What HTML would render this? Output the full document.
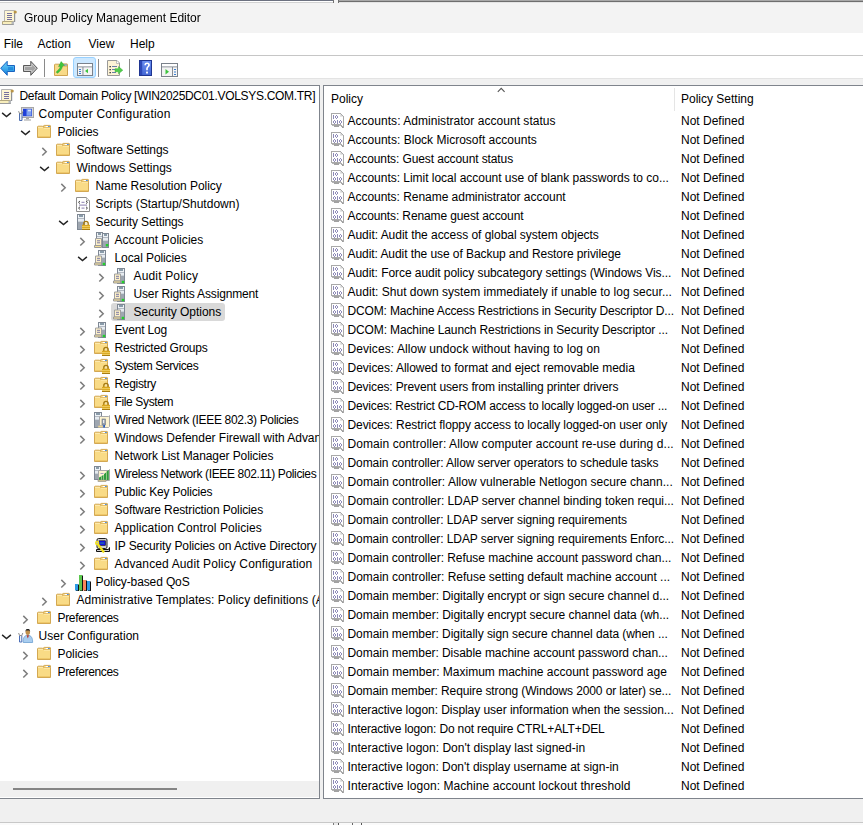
<!DOCTYPE html><html><head><meta charset="utf-8"><style>*{margin:0;padding:0;box-sizing:border-box}
html,body{width:863px;height:825px;overflow:hidden;background:#f0f0f0;font-family:"Liberation Sans",sans-serif;font-size:12px;color:#000}
.abs{position:absolute}
#topstrip{position:absolute;left:0;top:0;width:863px;height:3px}
#title{position:absolute;left:0;top:3px;width:863px;height:30px;background:#f3f3f3}
#menubar{position:absolute;left:0;top:33px;width:863px;height:22px;background:#fff}
#menuline{position:absolute;left:0;top:55px;width:863px;height:1px;background:#c6c6c6}
#toolbar{position:absolute;left:0;top:56px;width:863px;height:22px;background:#fff}
#toolline{position:absolute;left:0;top:78px;width:863px;height:1px;background:#e3e3e3}
.txt{position:absolute;white-space:nowrap;line-height:18px;height:18px}
#tree{position:absolute;left:-1px;top:85px;width:321px;height:714px;border:1px solid #7f848c;background:#fff;overflow:hidden}
#treein{position:absolute;left:0;top:0;width:319px;height:695px;overflow:hidden}
#hscroll{position:absolute;left:0;top:695px;width:319px;height:16px;background:#f0f0f0}
#hthumb{position:absolute;left:13px;top:7px;width:164px;height:2px;background:#858585}
#list{position:absolute;left:323px;top:85px;width:545px;height:714px;border:1px solid #7f848c;background:#fff;overflow:hidden}
.exp,.ico,.tt{position:absolute;height:18px;line-height:18px;white-space:nowrap}
svg{display:block}
.sel{position:absolute;height:18px;background:#d9d9d9;border-radius:3px}
.hdr,.lt,.lv{position:absolute;white-space:nowrap;height:19px;line-height:19px}
.lt{left:23.5px}
.lv{left:357px}
.lico{position:absolute;left:7px}
#coldiv{position:absolute;left:350px;top:2px;width:1px;height:23px;background:#e5e5e5}
#sortarrow{position:absolute;left:173px;top:1px}
#status{position:absolute;left:0;top:799px;width:863px;height:23px;background:#f0f0f0}
#bottomline{position:absolute;left:0;top:822px;width:863px;height:1px;background:#c8c8c8}
#bottomw{position:absolute;left:0;top:823px;width:863px;height:2px;background:#fafafa}
</style></head><body><div id="topstrip">
 <div class="abs" style="left:0;top:0;width:333px;height:1px;background:#6c7180"></div>
 <div class="abs" style="left:0;top:1px;width:333px;height:1px;background:#ffffff"></div>
 <div class="abs" style="left:0;top:2px;width:333px;height:1px;background:#d2d2d2"></div>
 <div class="abs" style="left:333px;top:0;width:1px;height:3px;background:#707070"></div>
 <div class="abs" style="left:334px;top:0;width:4px;height:3px;background:#f4f4f4"></div>
 <div class="abs" style="left:338px;top:0;width:1px;height:3px;background:#707070"></div>
 <div class="abs" style="left:339px;top:0;width:524px;height:1px;background:#a8a8a8"></div>
 <div class="abs" style="left:339px;top:1px;width:524px;height:1px;background:#6e6e6e"></div>
 <div class="abs" style="left:339px;top:2px;width:524px;height:1px;background:#e4e4e4"></div>
</div>
<div id="title"><div class="abs" id="titleicon" style="left:0px;top:7px"><svg width="18" height="16" viewBox="0 0 18 16" ><g transform="translate(2,0) scale(1)"><path d="M2.5 0.5H12.5V11.5H2.5Z" fill="#fdf5d3" stroke="#b4b4b4"/><rect x="12" y="1" width="1.2" height="11" fill="#8f9296"/><circle cx="13.2" cy="2" r="1.6" fill="#b99446"/><rect x="5" y="3" width="5" height="1" fill="#75709f"/><rect x="5" y="5" width="5" height="1" fill="#75709f"/><rect x="5" y="7" width="5" height="1" fill="#75709f"/><rect x="5" y="9" width="5" height="1" fill="#75709f"/><path d="M0.5 11.5H10.5V14.5H0.5Z" fill="#f8eebc" stroke="#b3a77e"/><rect x="9.5" y="12" width="2.5" height="3" fill="#b6b9bd"/><rect x="0.5" y="14" width="11" height="1" fill="#9b9b9b"/></g></svg></div><div class="txt" style="left:23.5px;top:6px;line-height:18px;will-change:transform">Group Policy Management Editor</div></div>
<div id="menubar">
 <div class="txt" style="left:3.7px;top:2px">File</div>
 <div class="txt" style="left:37.5px;top:2px">Action</div>
 <div class="txt" style="left:88.5px;top:2px">View</div>
 <div class="txt" style="left:130px;top:2px">Help</div>
</div>
<div id="menuline"></div>
<div id="toolbar"><div class="abs" style="left:0;top:4px"><svg width="16" height="17"><defs><linearGradient id="gb" x1="0" y1="0" x2="0" y2="1"><stop offset="0" stop-color="#6fd3fb"/><stop offset="1" stop-color="#1383dc"/></linearGradient></defs><path d="M0.7 8.2L7.2 1.3V5.5H14.5V11.5H7.2V15.3Z" fill="url(#gb)" stroke="#1a62c0" stroke-width="1"/><path d="M8 7H13V10H8Z" fill="#0a6fcf" opacity=".5"/></svg></div>
<div class="abs" style="left:22px;top:4px"><svg width="16" height="17"><path d="M15.3 8.2L8.8 1.3V5.5H1.5V11.5H8.8V15.3Z" fill="#a3a3a3" stroke="#5a5a5a" stroke-width="1"/><path d="M9.8 3.7L14 8.2L9.8 12.7V10.5H2.5V6.5H9.8Z" fill="none" stroke="#d8d8d8" stroke-width=".8"/></svg></div>
<div class="abs" style="left:44px;top:3px;width:1px;height:18px;background:#8a8a8a"></div>
<div class="abs" style="left:54px;top:3px"><svg width="16" height="17"><path d="M0.5 16.5V6a.8.8 0 0 1 .8-.8H5.5L6.5 7H13.5V16.5Z" fill="#f8da88" stroke="#cfa451"/><path d="M7 7V5.4a.5.5 0 0 1 .5-.5H13a.5.5 0 0 1 .5.5V7" fill="#f3d27c" stroke="#cfa451"/><rect x="10" y="5.5" width="3" height="1" fill="#4d8fe3"/><path d="M2.2 13.2C3.2 11.5 5.8 10.2 6.6 7.2L4.6 7.6L7.2 2.6L10.4 6.4L8.6 6.8C8 10.5 5.5 12.5 3.6 14.2Z" fill="#3ec73c" stroke="#2aa52a" stroke-width=".5"/></svg></div>
<div class="abs" style="left:73px;top:1px;width:23px;height:21px;background:#cce8ff;border:1px solid #99d1ff;border-radius:3px"></div>
<div class="abs" style="left:77px;top:7px"><svg width="16" height="13"><rect x="0.5" y="0.5" width="15" height="12" fill="#f4f4f4" stroke="#7b828b"/><rect x="1" y="1" width="14" height="2" fill="#ffffff"/><rect x="11" y="1.5" width="1" height="1" fill="#fff"/><rect x="13" y="1.5" width="1" height="1" fill="#fff"/><rect x="1" y="3.5" width="14" height="0.8" fill="#7b828b"/><rect x="5.5" y="4" width="0.9" height="8.5" fill="#7b828b"/><rect x="2" y="6" width="2" height="1" fill="#3a7fd0"/><rect x="2" y="8" width="2" height="1" fill="#3a7fd0"/><rect x="2" y="10" width="2" height="1" fill="#3a7fd0"/><path d="M11 5.8V10.2L8 8Z" fill="#3ec43e"/></svg></div>
<div class="abs" style="left:98px;top:3px;width:1px;height:18px;background:#8a8a8a"></div>
<div class="abs" style="left:107px;top:4px"><svg width="17" height="17"><path d="M0.5 0.5H10L12.5 3V15.5H0.5Z" fill="#fdf3d6" stroke="#9a9a9a"/><path d="M9.5 0.8V3.5H12.2" fill="#fff" stroke="#b0b0b0" stroke-width=".8"/><rect x="2.5" y="6" width="1.3" height="1.3" fill="#222"/><rect x="2.5" y="9" width="1.3" height="1.3" fill="#222"/><rect x="2.5" y="12" width="1.3" height="1.3" fill="#222"/><rect x="5" y="6" width="5" height="1" fill="#6a7fa6"/><rect x="5" y="9" width="5" height="1" fill="#6a7fa6"/><rect x="5" y="12" width="4" height="1" fill="#6a7fa6"/><path d="M8 8.7H11.5V6.6L15.8 10.2L11.5 13.8V11.7H8Z" fill="#52cc4c" stroke="#38b238" stroke-width=".5"/></svg></div>
<div class="abs" style="left:129px;top:3px;width:1px;height:18px;background:#8a8a8a"></div>
<div class="abs" style="left:139px;top:4px"><svg width="14" height="17"><defs><linearGradient id="gh" x1="0" y1="0" x2="0" y2="1"><stop offset="0" stop-color="#6a8ff0"/><stop offset="1" stop-color="#4467d4"/></linearGradient></defs><rect x="0" y="0" width="13" height="16" fill="#1f3591"/><rect x="1" y="1" width="11" height="14" fill="url(#gh)"/><rect x="1" y="1" width="2.2" height="14" fill="#2c48b8"/><path d="M5.4 5.2C5.4 3.3 6.7 2.6 8.2 2.6C9.9 2.6 10.9 3.6 10.9 5C10.9 6.6 9.2 7.1 8.8 8.5V10.2H7.2V8.3C7.5 6.6 9.2 6.2 9.2 5C9.2 4.3 8.8 3.9 8.1 3.9C7.4 3.9 7 4.4 7 5.2Z" fill="#fff"/><rect x="7.1" y="11.6" width="1.8" height="1.9" fill="#fff"/></svg></div>
<div class="abs" style="left:161px;top:7px"><svg width="17" height="14"><rect x="0.5" y="0.5" width="16" height="13" fill="#f4f4f4" stroke="#7b828b"/><rect x="1" y="1" width="15" height="2" fill="#ffffff"/><rect x="12" y="1.5" width="1" height="1" fill="#fff"/><rect x="14" y="1.5" width="1" height="1" fill="#fff"/><rect x="1" y="3.5" width="15" height="0.8" fill="#7b828b"/><rect x="11" y="4" width="0.9" height="9.5" fill="#7b828b"/><rect x="13" y="6" width="2" height="1" fill="#3a7fd0"/><rect x="13" y="8.5" width="2" height="1" fill="#3a7fd0"/><rect x="13" y="11" width="2" height="1" fill="#3a7fd0"/><path d="M4.5 6V11.5L8 8.7Z" fill="#3ec43e"/></svg></div>
</div>
<div id="toolline"></div>
<div id="status"></div>
<div id="bottomline"></div>
<div id="bottomw"></div>
<div class="abs" style="left:333px;top:823px;width:1px;height:2px;background:#7a7a7a"></div>
<div class="abs" style="left:334px;top:823px;width:4px;height:2px;background:#ececec"></div>
<div class="abs" style="left:338px;top:823px;width:1px;height:2px;background:#555"></div>
<div class="abs" style="left:352px;top:823px;width:1px;height:2px;background:#666"></div>
<div class="abs" style="left:361px;top:823px;width:1px;height:2px;background:#555"></div>
<div id="tree"><div id="treein"><div class="ico" style="top:0px;left:-1px"><svg width="20" height="18" viewBox="0 0 20 18" ><g transform="translate(0,3) scale(1)"><path d="M2.5 0.5H12.5V11.5H2.5Z" fill="#fdf5d3" stroke="#b4b4b4"/><rect x="12" y="1" width="1.2" height="11" fill="#8f9296"/><circle cx="13.2" cy="2" r="1.6" fill="#b99446"/><rect x="5" y="3" width="5" height="1" fill="#75709f"/><rect x="5" y="5" width="5" height="1" fill="#75709f"/><rect x="5" y="7" width="5" height="1" fill="#75709f"/><rect x="5" y="9" width="5" height="1" fill="#75709f"/><path d="M0.5 11.5H10.5V14.5H0.5Z" fill="#f8eebc" stroke="#b3a77e"/><rect x="9.5" y="12" width="2.5" height="3" fill="#b6b9bd"/><rect x="0.5" y="14" width="11" height="1" fill="#9b9b9b"/></g></svg></div><div class="tt" style="top:1px;left:19.5px;letter-spacing:-0.308px">Default Domain Policy [WIN2025DC01.VOLSYS.COM.TR]</div><div class="exp" style="top:25.5px;left:1px"><svg width="11" height="6" viewBox="0 0 11 6" ><path d="M1.1 0.9L5.5 4.6L9.9 0.9" fill="none" stroke="#262626" stroke-width="1.45"/></svg></div><div class="ico" style="top:18px;left:18px"><svg width="20" height="18" viewBox="0 0 20 18" ><rect x="3.5" y="3.5" width="12" height="10" fill="#d9d9d9" stroke="#a7a7a7"/><rect x="5" y="4.8" width="9" height="7.4" fill="#1f3fd8"/><rect x="8.5" y="5.2" width="5" height="6.5" fill="#7ea0ef"/><rect x="10" y="5.8" width="3" height="1.5" fill="#d5e1fb"/><rect x="8" y="14" width="3" height="1.3" fill="#a5a5a5"/><rect x="6" y="15.3" width="7" height="1.4" fill="#b9b9b9"/><path d="M1.5 9V16.5H4V9" fill="#e9eef5" stroke="#4f6fb0" stroke-width="1"/><path d="M0.6 7.2L1.6 9.6H4L5 7.2" fill="none" stroke="#8a8a8a" stroke-width="1"/></svg></div><div class="tt" style="top:19px;left:38.5px;letter-spacing:0.214px">Computer Configuration</div><div class="exp" style="top:43.5px;left:20px"><svg width="11" height="6" viewBox="0 0 11 6" ><path d="M1.1 0.9L5.5 4.6L9.9 0.9" fill="none" stroke="#262626" stroke-width="1.45"/></svg></div><div class="ico" style="top:36px;left:37px"><svg width="20" height="18" viewBox="0 0 20 18" ><path d="M0.5 15.5V4.9a.7.7 0 0 1 .7-.7H5.6L6.8 5.5H13.5V15.5Z" fill="#f9db86" stroke="#d3a853"/><path d="M6.6 5.4V3.9a.6.6 0 0 1 .6-.5H12.9a.6.6 0 0 1 .6.5V5.6" fill="#f5d57f" stroke="#d3a853"/><rect x="1" y="5" width="5" height="1" fill="#fde9ad"/><rect x="7" y="6" width="6" height="1" fill="#fde6a2"/><rect x="8.6" y="4" width="2.4" height="1" fill="#fff"/><rect x="11" y="4" width="1.8" height="1" fill="#4d8fe3"/><rect x="1" y="14" width="12" height="1" fill="#efc86a"/></svg></div><div class="tt" style="top:37px;left:57.5px;letter-spacing:-0.043px">Policies</div><div class="exp" style="top:60.5px;left:41.2px"><svg width="7" height="10" viewBox="0 0 7 10" ><path d="M1.3 0.9L5.2 4.7L1.3 8.5" fill="none" stroke="#7d7d7d" stroke-width="1.5"/></svg></div><div class="ico" style="top:54px;left:56px"><svg width="20" height="18" viewBox="0 0 20 18" ><path d="M0.5 15.5V4.9a.7.7 0 0 1 .7-.7H5.6L6.8 5.5H13.5V15.5Z" fill="#f9db86" stroke="#d3a853"/><path d="M6.6 5.4V3.9a.6.6 0 0 1 .6-.5H12.9a.6.6 0 0 1 .6.5V5.6" fill="#f5d57f" stroke="#d3a853"/><rect x="1" y="5" width="5" height="1" fill="#fde9ad"/><rect x="7" y="6" width="6" height="1" fill="#fde6a2"/><rect x="8.6" y="4" width="2.4" height="1" fill="#fff"/><rect x="11" y="4" width="1.8" height="1" fill="#4d8fe3"/><rect x="1" y="14" width="12" height="1" fill="#efc86a"/></svg></div><div class="tt" style="top:55px;left:76.5px;letter-spacing:-0.131px">Software Settings</div><div class="exp" style="top:79.5px;left:39px"><svg width="11" height="6" viewBox="0 0 11 6" ><path d="M1.1 0.9L5.5 4.6L9.9 0.9" fill="none" stroke="#262626" stroke-width="1.45"/></svg></div><div class="ico" style="top:72px;left:56px"><svg width="20" height="18" viewBox="0 0 20 18" ><path d="M0.5 15.5V4.9a.7.7 0 0 1 .7-.7H5.6L6.8 5.5H13.5V15.5Z" fill="#f9db86" stroke="#d3a853"/><path d="M6.6 5.4V3.9a.6.6 0 0 1 .6-.5H12.9a.6.6 0 0 1 .6.5V5.6" fill="#f5d57f" stroke="#d3a853"/><rect x="1" y="5" width="5" height="1" fill="#fde9ad"/><rect x="7" y="6" width="6" height="1" fill="#fde6a2"/><rect x="8.6" y="4" width="2.4" height="1" fill="#fff"/><rect x="11" y="4" width="1.8" height="1" fill="#4d8fe3"/><rect x="1" y="14" width="12" height="1" fill="#efc86a"/></svg></div><div class="tt" style="top:73px;left:76.5px;letter-spacing:0.0px">Windows Settings</div><div class="exp" style="top:96.5px;left:60.2px"><svg width="7" height="10" viewBox="0 0 7 10" ><path d="M1.3 0.9L5.2 4.7L1.3 8.5" fill="none" stroke="#7d7d7d" stroke-width="1.5"/></svg></div><div class="ico" style="top:90px;left:75px"><svg width="20" height="18" viewBox="0 0 20 18" ><path d="M0.5 15.5V4.9a.7.7 0 0 1 .7-.7H5.6L6.8 5.5H13.5V15.5Z" fill="#f9db86" stroke="#d3a853"/><path d="M6.6 5.4V3.9a.6.6 0 0 1 .6-.5H12.9a.6.6 0 0 1 .6.5V5.6" fill="#f5d57f" stroke="#d3a853"/><rect x="1" y="5" width="5" height="1" fill="#fde9ad"/><rect x="7" y="6" width="6" height="1" fill="#fde6a2"/><rect x="8.6" y="4" width="2.4" height="1" fill="#fff"/><rect x="11" y="4" width="1.8" height="1" fill="#4d8fe3"/><rect x="1" y="14" width="12" height="1" fill="#efc86a"/></svg></div><div class="tt" style="top:91px;left:95.5px;letter-spacing:-0.057px">Name Resolution Policy</div><div class="ico" style="top:108px;left:75px"><svg width="20" height="19" viewBox="0 0 20 19" ><path d="M1.5 3.5H11.5L14.5 6.5V17.5H1.5Z" fill="#fff" stroke="#8e8e8e"/><path d="M11.5 3.5V6.5H14.5" fill="#f0f0f0" stroke="#b5b5b5"/><path d="M5 7L3.5 8.3L5 9.6M11 7L12.5 8.3L11 9.6" fill="none" stroke="#4a4a4a" stroke-width="1"/><rect x="6.5" y="7.8" width="3" height="1" fill="#8b7fb0"/><rect x="4" y="10.6" width="8" height="1" fill="#8b7fb0"/><path d="M5 12.8L3.5 14.1L5 15.4M11 12.8L12.5 14.1L11 15.4" fill="none" stroke="#4a4a4a" stroke-width="1"/><rect x="6.5" y="13.6" width="3" height="1" fill="#8b7fb0"/></svg></div><div class="tt" style="top:109px;left:95.5px;letter-spacing:0.024px">Scripts (Startup/Shutdown)</div><div class="exp" style="top:133.5px;left:58px"><svg width="11" height="6" viewBox="0 0 11 6" ><path d="M1.1 0.9L5.5 4.6L9.9 0.9" fill="none" stroke="#262626" stroke-width="1.45"/></svg></div><div class="ico" style="top:126px;left:75px"><svg width="20" height="19" viewBox="0 0 20 19" ><g transform="translate(2,2)"><rect x="0.5" y="0.5" width="7" height="15" fill="#b3bac3" stroke="#7f8894"/><rect x="1" y="1" width="6" height="3" fill="#eef2f6"/><rect x="2" y="1.5" width="4" height="1" fill="#27475e"/><rect x="1" y="5" width="6" height="2.5" fill="#e6ebf0"/><rect x="1" y="8" width="6" height="7" fill="#9ea6b0"/></g><g transform="translate(7,9)"><path d="M1.8 4V2.6a2.2 2.2 0 0 1 4.4 0V4" fill="none" stroke="#a57a12" stroke-width="1.3"/><rect x="3.2" y="1.6" width="1.6" height="1.6" fill="#f4e7b0"/><rect x="0" y="3.8" width="8" height="5.2" fill="#d9a61c"/><rect x="0" y="5.2" width="8" height="0.9" fill="#f2d16a"/><rect x="0" y="7" width="8" height="0.9" fill="#f2d16a"/><rect x="0" y="8.2" width="8" height="0.8" fill="#9c740f"/></g></svg></div><div class="tt" style="top:127px;left:95.5px;letter-spacing:-0.125px">Security Settings</div><div class="exp" style="top:150.5px;left:79.2px"><svg width="7" height="10" viewBox="0 0 7 10" ><path d="M1.3 0.9L5.2 4.7L1.3 8.5" fill="none" stroke="#7d7d7d" stroke-width="1.5"/></svg></div><div class="ico" style="top:144px;left:94px"><svg width="20" height="19" viewBox="0 0 20 19" ><g transform="translate(2,2)"><rect x="0.5" y="0.5" width="6" height="11" fill="#b3bac3" stroke="#7f8894"/><rect x="1" y="1" width="5" height="3" fill="#eef2f6"/><rect x="2" y="1.5" width="3" height="1" fill="#27475e"/><rect x="1" y="5" width="5" height="2.5" fill="#e6ebf0"/><rect x="1" y="8" width="5" height="3" fill="#9ea6b0"/></g><g transform="translate(8,3)"><rect x="0.5" y="0.5" width="6" height="14" fill="#b3bac3" stroke="#7f8894"/><rect x="1" y="1" width="5" height="3" fill="#eef2f6"/><rect x="2" y="1.5" width="3" height="1" fill="#27475e"/><rect x="1" y="5" width="5" height="2.5" fill="#e6ebf0"/><rect x="1" y="8" width="5" height="6" fill="#9ea6b0"/></g><g transform="translate(0,8)"><path d="M1.5 0.5H7.5V7.5H1.5Z" fill="#fdf0c8" stroke="#a0a0a0"/><rect x="3" y="2.3" width="3" height="1" fill="#7c7ba6"/><rect x="3" y="4.3" width="3" height="1" fill="#7c7ba6"/><path d="M0.5 7.5H7.5V9.5H0.5Z" fill="#f3dd95" stroke="#9b9b9b"/></g><rect x="11.8" y="14" width="2.5" height="2.4" fill="#22d12a"/></svg></div><div class="tt" style="top:145px;left:114.5px;letter-spacing:0.053px">Account Policies</div><div class="exp" style="top:169.5px;left:77px"><svg width="11" height="6" viewBox="0 0 11 6" ><path d="M1.1 0.9L5.5 4.6L9.9 0.9" fill="none" stroke="#262626" stroke-width="1.45"/></svg></div><div class="ico" style="top:162px;left:94px"><svg width="20" height="19" viewBox="0 0 20 19" ><g transform="translate(4,2)"><rect x="0.5" y="0.5" width="7" height="15" fill="#b3bac3" stroke="#7f8894"/><rect x="1" y="1" width="6" height="3" fill="#eef2f6"/><rect x="2" y="1.5" width="4" height="1" fill="#27475e"/><rect x="1" y="5" width="6" height="2.5" fill="#e6ebf0"/><rect x="1" y="8" width="6" height="7" fill="#9ea6b0"/></g><g transform="translate(0,7.5)"><path d="M1.5 0.5H7.5V7.5H1.5Z" fill="#fdf0c8" stroke="#a0a0a0"/><rect x="3" y="2.3" width="3" height="1" fill="#7c7ba6"/><rect x="3" y="4.3" width="3" height="1" fill="#7c7ba6"/><path d="M0.5 7.5H7.5V9.5H0.5Z" fill="#f3dd95" stroke="#9b9b9b"/></g><rect x="8.7" y="14.8" width="2.5" height="2.4" fill="#22d12a"/></svg></div><div class="tt" style="top:163px;left:114.5px;letter-spacing:-0.092px">Local Policies</div><div class="exp" style="top:186.5px;left:98.2px"><svg width="7" height="10" viewBox="0 0 7 10" ><path d="M1.3 0.9L5.2 4.7L1.3 8.5" fill="none" stroke="#7d7d7d" stroke-width="1.5"/></svg></div><div class="ico" style="top:180px;left:113px"><svg width="20" height="19" viewBox="0 0 20 19" ><g transform="translate(4,2)"><rect x="0.5" y="0.5" width="7" height="15" fill="#b3bac3" stroke="#7f8894"/><rect x="1" y="1" width="6" height="3" fill="#eef2f6"/><rect x="2" y="1.5" width="4" height="1" fill="#27475e"/><rect x="1" y="5" width="6" height="2.5" fill="#e6ebf0"/><rect x="1" y="8" width="6" height="7" fill="#9ea6b0"/></g><g transform="translate(0,7.5)"><path d="M1.5 0.5H7.5V7.5H1.5Z" fill="#fdf0c8" stroke="#a0a0a0"/><rect x="3" y="2.3" width="3" height="1" fill="#7c7ba6"/><rect x="3" y="4.3" width="3" height="1" fill="#7c7ba6"/><path d="M0.5 7.5H7.5V9.5H0.5Z" fill="#f3dd95" stroke="#9b9b9b"/></g><rect x="8.7" y="14.8" width="2.5" height="2.4" fill="#22d12a"/></svg></div><div class="tt" style="top:181px;left:133.5px;letter-spacing:0.164px">Audit Policy</div><div class="exp" style="top:204.5px;left:98.2px"><svg width="7" height="10" viewBox="0 0 7 10" ><path d="M1.3 0.9L5.2 4.7L1.3 8.5" fill="none" stroke="#7d7d7d" stroke-width="1.5"/></svg></div><div class="ico" style="top:198px;left:113px"><svg width="20" height="19" viewBox="0 0 20 19" ><g transform="translate(4,2)"><rect x="0.5" y="0.5" width="7" height="15" fill="#b3bac3" stroke="#7f8894"/><rect x="1" y="1" width="6" height="3" fill="#eef2f6"/><rect x="2" y="1.5" width="4" height="1" fill="#27475e"/><rect x="1" y="5" width="6" height="2.5" fill="#e6ebf0"/><rect x="1" y="8" width="6" height="7" fill="#9ea6b0"/></g><g transform="translate(0,7.5)"><path d="M1.5 0.5H7.5V7.5H1.5Z" fill="#fdf0c8" stroke="#a0a0a0"/><rect x="3" y="2.3" width="3" height="1" fill="#7c7ba6"/><rect x="3" y="4.3" width="3" height="1" fill="#7c7ba6"/><path d="M0.5 7.5H7.5V9.5H0.5Z" fill="#f3dd95" stroke="#9b9b9b"/></g><rect x="8.7" y="14.8" width="2.5" height="2.4" fill="#22d12a"/></svg></div><div class="tt" style="top:199px;left:133.5px;letter-spacing:-0.148px">User Rights Assignment</div><div class="sel" style="top:217px;left:111px;width:114px"></div><div class="exp" style="top:222.5px;left:98.2px"><svg width="7" height="10" viewBox="0 0 7 10" ><path d="M1.3 0.9L5.2 4.7L1.3 8.5" fill="none" stroke="#7d7d7d" stroke-width="1.5"/></svg></div><div class="ico" style="top:216px;left:113px"><svg width="20" height="19" viewBox="0 0 20 19" ><g transform="translate(4,2)"><rect x="0.5" y="0.5" width="7" height="15" fill="#b3bac3" stroke="#7f8894"/><rect x="1" y="1" width="6" height="3" fill="#eef2f6"/><rect x="2" y="1.5" width="4" height="1" fill="#27475e"/><rect x="1" y="5" width="6" height="2.5" fill="#e6ebf0"/><rect x="1" y="8" width="6" height="7" fill="#9ea6b0"/></g><g transform="translate(0,7.5)"><path d="M1.5 0.5H7.5V7.5H1.5Z" fill="#fdf0c8" stroke="#a0a0a0"/><rect x="3" y="2.3" width="3" height="1" fill="#7c7ba6"/><rect x="3" y="4.3" width="3" height="1" fill="#7c7ba6"/><path d="M0.5 7.5H7.5V9.5H0.5Z" fill="#f3dd95" stroke="#9b9b9b"/></g><rect x="8.7" y="14.8" width="2.5" height="2.4" fill="#22d12a"/></svg></div><div class="tt" style="top:217px;left:133.5px;letter-spacing:-0.02px">Security Options</div><div class="exp" style="top:240.5px;left:79.2px"><svg width="7" height="10" viewBox="0 0 7 10" ><path d="M1.3 0.9L5.2 4.7L1.3 8.5" fill="none" stroke="#7d7d7d" stroke-width="1.5"/></svg></div><div class="ico" style="top:234px;left:94px"><svg width="20" height="19" viewBox="0 0 20 19" ><g transform="translate(4,2)"><rect x="0.5" y="0.5" width="7" height="15" fill="#b3bac3" stroke="#7f8894"/><rect x="1" y="1" width="6" height="3" fill="#eef2f6"/><rect x="2" y="1.5" width="4" height="1" fill="#27475e"/><rect x="1" y="5" width="6" height="2.5" fill="#e6ebf0"/><rect x="1" y="8" width="6" height="7" fill="#9ea6b0"/></g><g transform="translate(0,7.5)"><path d="M1.5 0.5H7.5V7.5H1.5Z" fill="#fdf0c8" stroke="#a0a0a0"/><rect x="3" y="2.3" width="3" height="1" fill="#7c7ba6"/><rect x="3" y="4.3" width="3" height="1" fill="#7c7ba6"/><path d="M0.5 7.5H7.5V9.5H0.5Z" fill="#f3dd95" stroke="#9b9b9b"/></g><rect x="8.7" y="14.8" width="2.5" height="2.4" fill="#22d12a"/></svg></div><div class="tt" style="top:235px;left:114.5px;letter-spacing:-0.175px">Event Log</div><div class="exp" style="top:258.5px;left:79.2px"><svg width="7" height="10" viewBox="0 0 7 10" ><path d="M1.3 0.9L5.2 4.7L1.3 8.5" fill="none" stroke="#7d7d7d" stroke-width="1.5"/></svg></div><div class="ico" style="top:252px;left:94px"><svg width="20" height="19" viewBox="0 0 20 19" ><path d="M0.5 15.5V4.9a.7.7 0 0 1 .7-.7H5.6L6.8 5.5H13.5V15.5Z" fill="#f9db86" stroke="#d3a853"/><path d="M6.6 5.4V3.9a.6.6 0 0 1 .6-.5H12.9a.6.6 0 0 1 .6.5V5.6" fill="#f5d57f" stroke="#d3a853"/><rect x="1" y="5" width="5" height="1" fill="#fde9ad"/><rect x="7" y="6" width="6" height="1" fill="#fde6a2"/><rect x="8.6" y="4" width="2.4" height="1" fill="#fff"/><rect x="11" y="4" width="1.8" height="1" fill="#4d8fe3"/><rect x="1" y="14" width="12" height="1" fill="#efc86a"/><g transform="translate(8,9)"><path d="M1.8 4V2.6a2.2 2.2 0 0 1 4.4 0V4" fill="none" stroke="#a57a12" stroke-width="1.3"/><rect x="3.2" y="1.6" width="1.6" height="1.6" fill="#f4e7b0"/><rect x="0" y="3.8" width="8" height="5.2" fill="#d9a61c"/><rect x="0" y="5.2" width="8" height="0.9" fill="#f2d16a"/><rect x="0" y="7" width="8" height="0.9" fill="#f2d16a"/><rect x="0" y="8.2" width="8" height="0.8" fill="#9c740f"/></g></svg></div><div class="tt" style="top:253px;left:114.5px;letter-spacing:-0.213px">Restricted Groups</div><div class="exp" style="top:276.5px;left:79.2px"><svg width="7" height="10" viewBox="0 0 7 10" ><path d="M1.3 0.9L5.2 4.7L1.3 8.5" fill="none" stroke="#7d7d7d" stroke-width="1.5"/></svg></div><div class="ico" style="top:270px;left:94px"><svg width="20" height="19" viewBox="0 0 20 19" ><path d="M0.5 15.5V4.9a.7.7 0 0 1 .7-.7H5.6L6.8 5.5H13.5V15.5Z" fill="#f9db86" stroke="#d3a853"/><path d="M6.6 5.4V3.9a.6.6 0 0 1 .6-.5H12.9a.6.6 0 0 1 .6.5V5.6" fill="#f5d57f" stroke="#d3a853"/><rect x="1" y="5" width="5" height="1" fill="#fde9ad"/><rect x="7" y="6" width="6" height="1" fill="#fde6a2"/><rect x="8.6" y="4" width="2.4" height="1" fill="#fff"/><rect x="11" y="4" width="1.8" height="1" fill="#4d8fe3"/><rect x="1" y="14" width="12" height="1" fill="#efc86a"/><g transform="translate(8,9)"><path d="M1.8 4V2.6a2.2 2.2 0 0 1 4.4 0V4" fill="none" stroke="#a57a12" stroke-width="1.3"/><rect x="3.2" y="1.6" width="1.6" height="1.6" fill="#f4e7b0"/><rect x="0" y="3.8" width="8" height="5.2" fill="#d9a61c"/><rect x="0" y="5.2" width="8" height="0.9" fill="#f2d16a"/><rect x="0" y="7" width="8" height="0.9" fill="#f2d16a"/><rect x="0" y="8.2" width="8" height="0.8" fill="#9c740f"/></g></svg></div><div class="tt" style="top:271px;left:114.5px;letter-spacing:-0.371px">System Services</div><div class="exp" style="top:294.5px;left:79.2px"><svg width="7" height="10" viewBox="0 0 7 10" ><path d="M1.3 0.9L5.2 4.7L1.3 8.5" fill="none" stroke="#7d7d7d" stroke-width="1.5"/></svg></div><div class="ico" style="top:288px;left:94px"><svg width="20" height="19" viewBox="0 0 20 19" ><path d="M0.5 15.5V4.9a.7.7 0 0 1 .7-.7H5.6L6.8 5.5H13.5V15.5Z" fill="#f9db86" stroke="#d3a853"/><path d="M6.6 5.4V3.9a.6.6 0 0 1 .6-.5H12.9a.6.6 0 0 1 .6.5V5.6" fill="#f5d57f" stroke="#d3a853"/><rect x="1" y="5" width="5" height="1" fill="#fde9ad"/><rect x="7" y="6" width="6" height="1" fill="#fde6a2"/><rect x="8.6" y="4" width="2.4" height="1" fill="#fff"/><rect x="11" y="4" width="1.8" height="1" fill="#4d8fe3"/><rect x="1" y="14" width="12" height="1" fill="#efc86a"/><g transform="translate(8,9)"><path d="M1.8 4V2.6a2.2 2.2 0 0 1 4.4 0V4" fill="none" stroke="#a57a12" stroke-width="1.3"/><rect x="3.2" y="1.6" width="1.6" height="1.6" fill="#f4e7b0"/><rect x="0" y="3.8" width="8" height="5.2" fill="#d9a61c"/><rect x="0" y="5.2" width="8" height="0.9" fill="#f2d16a"/><rect x="0" y="7" width="8" height="0.9" fill="#f2d16a"/><rect x="0" y="8.2" width="8" height="0.8" fill="#9c740f"/></g></svg></div><div class="tt" style="top:289px;left:114.5px;letter-spacing:-0.314px">Registry</div><div class="exp" style="top:312.5px;left:79.2px"><svg width="7" height="10" viewBox="0 0 7 10" ><path d="M1.3 0.9L5.2 4.7L1.3 8.5" fill="none" stroke="#7d7d7d" stroke-width="1.5"/></svg></div><div class="ico" style="top:306px;left:94px"><svg width="20" height="19" viewBox="0 0 20 19" ><path d="M0.5 15.5V4.9a.7.7 0 0 1 .7-.7H5.6L6.8 5.5H13.5V15.5Z" fill="#f9db86" stroke="#d3a853"/><path d="M6.6 5.4V3.9a.6.6 0 0 1 .6-.5H12.9a.6.6 0 0 1 .6.5V5.6" fill="#f5d57f" stroke="#d3a853"/><rect x="1" y="5" width="5" height="1" fill="#fde9ad"/><rect x="7" y="6" width="6" height="1" fill="#fde6a2"/><rect x="8.6" y="4" width="2.4" height="1" fill="#fff"/><rect x="11" y="4" width="1.8" height="1" fill="#4d8fe3"/><rect x="1" y="14" width="12" height="1" fill="#efc86a"/><g transform="translate(8,9)"><path d="M1.8 4V2.6a2.2 2.2 0 0 1 4.4 0V4" fill="none" stroke="#a57a12" stroke-width="1.3"/><rect x="3.2" y="1.6" width="1.6" height="1.6" fill="#f4e7b0"/><rect x="0" y="3.8" width="8" height="5.2" fill="#d9a61c"/><rect x="0" y="5.2" width="8" height="0.9" fill="#f2d16a"/><rect x="0" y="7" width="8" height="0.9" fill="#f2d16a"/><rect x="0" y="8.2" width="8" height="0.8" fill="#9c740f"/></g></svg></div><div class="tt" style="top:307px;left:114.5px;letter-spacing:-0.36px">File System</div><div class="exp" style="top:330.5px;left:79.2px"><svg width="7" height="10" viewBox="0 0 7 10" ><path d="M1.3 0.9L5.2 4.7L1.3 8.5" fill="none" stroke="#7d7d7d" stroke-width="1.5"/></svg></div><div class="ico" style="top:324px;left:94px"><svg width="20" height="19" viewBox="0 0 20 19" ><g transform="translate(0,2)"><rect x="0.5" y="0.5" width="7" height="15" fill="#b3bac3" stroke="#7f8894"/><rect x="1" y="1" width="6" height="3" fill="#eef2f6"/><rect x="2" y="1.5" width="4" height="1" fill="#27475e"/><rect x="1" y="5" width="6" height="2.5" fill="#e6ebf0"/><rect x="1" y="8" width="6" height="7" fill="#9ea6b0"/></g><path d="M5.5 6.5H14.5L15.5 5.5V16.5L14.5 17.5H5.5Z" fill="#fdf3cf" stroke="#a8a8a8"/><rect x="8" y="9" width="3.5" height="6" fill="#9aa3ad" stroke="#6d7682" stroke-width=".6"/><rect x="9.2" y="10" width="1" height="3" fill="#fff"/><rect x="8.5" y="15" width="2.5" height="2.5" fill="#2a60c0"/><rect x="4" y="15.5" width="5" height="2" fill="#f1d98f" stroke="#a8a8a8" stroke-width=".6"/></svg></div><div class="tt" style="top:325px;left:114.5px;letter-spacing:-0.329px">Wired Network (IEEE 802.3) Policies</div><div class="exp" style="top:348.5px;left:79.2px"><svg width="7" height="10" viewBox="0 0 7 10" ><path d="M1.3 0.9L5.2 4.7L1.3 8.5" fill="none" stroke="#7d7d7d" stroke-width="1.5"/></svg></div><div class="ico" style="top:342px;left:94px"><svg width="20" height="18" viewBox="0 0 20 18" ><path d="M0.5 15.5V4.9a.7.7 0 0 1 .7-.7H5.6L6.8 5.5H13.5V15.5Z" fill="#f9db86" stroke="#d3a853"/><path d="M6.6 5.4V3.9a.6.6 0 0 1 .6-.5H12.9a.6.6 0 0 1 .6.5V5.6" fill="#f5d57f" stroke="#d3a853"/><rect x="1" y="5" width="5" height="1" fill="#fde9ad"/><rect x="7" y="6" width="6" height="1" fill="#fde6a2"/><rect x="8.6" y="4" width="2.4" height="1" fill="#fff"/><rect x="11" y="4" width="1.8" height="1" fill="#4d8fe3"/><rect x="1" y="14" width="12" height="1" fill="#efc86a"/></svg></div><div class="tt" style="top:343px;left:114.5px;letter-spacing:-0.021px">Windows Defender Firewall with Advanced Security</div><div class="ico" style="top:360px;left:94px"><svg width="20" height="18" viewBox="0 0 20 18" ><path d="M0.5 15.5V4.9a.7.7 0 0 1 .7-.7H5.6L6.8 5.5H13.5V15.5Z" fill="#f9db86" stroke="#d3a853"/><path d="M6.6 5.4V3.9a.6.6 0 0 1 .6-.5H12.9a.6.6 0 0 1 .6.5V5.6" fill="#f5d57f" stroke="#d3a853"/><rect x="1" y="5" width="5" height="1" fill="#fde9ad"/><rect x="7" y="6" width="6" height="1" fill="#fde6a2"/><rect x="8.6" y="4" width="2.4" height="1" fill="#fff"/><rect x="11" y="4" width="1.8" height="1" fill="#4d8fe3"/><rect x="1" y="14" width="12" height="1" fill="#efc86a"/></svg></div><div class="tt" style="top:361px;left:114.5px;letter-spacing:-0.089px">Network List Manager Policies</div><div class="exp" style="top:384.5px;left:79.2px"><svg width="7" height="10" viewBox="0 0 7 10" ><path d="M1.3 0.9L5.2 4.7L1.3 8.5" fill="none" stroke="#7d7d7d" stroke-width="1.5"/></svg></div><div class="ico" style="top:378px;left:94px"><svg width="20" height="19" viewBox="0 0 20 19" ><g transform="translate(0,2)"><rect x="0.5" y="0.5" width="6" height="13" fill="#b3bac3" stroke="#7f8894"/><rect x="1" y="1" width="5" height="3" fill="#eef2f6"/><rect x="2" y="1.5" width="3" height="1" fill="#27475e"/><rect x="1" y="5" width="5" height="2.5" fill="#e6ebf0"/><rect x="1" y="8" width="5" height="5" fill="#9ea6b0"/></g><path d="M4.5 6.5H14.5L15.5 5.5V16.5H4.5Z" fill="#fdf3cf" stroke="#a8a8a8"/><path d="M5 16V13.5L7 12.5V16ZM7.5 16V12L9.5 11V16ZM10 16V10L12 8.5V16ZM12.5 16V7.5L14.8 6V16Z" fill="#2f9a3c"/><rect x="6.5" y="9" width="3" height="0.8" fill="#8f85b9"/><rect x="4" y="16" width="8" height="1.6" fill="#f1d98f" stroke="#888" stroke-width=".6"/></svg></div><div class="tt" style="top:379px;left:114.5px;letter-spacing:-0.36px">Wireless Network (IEEE 802.11) Policies</div><div class="exp" style="top:402.5px;left:79.2px"><svg width="7" height="10" viewBox="0 0 7 10" ><path d="M1.3 0.9L5.2 4.7L1.3 8.5" fill="none" stroke="#7d7d7d" stroke-width="1.5"/></svg></div><div class="ico" style="top:396px;left:94px"><svg width="20" height="18" viewBox="0 0 20 18" ><path d="M0.5 15.5V4.9a.7.7 0 0 1 .7-.7H5.6L6.8 5.5H13.5V15.5Z" fill="#f9db86" stroke="#d3a853"/><path d="M6.6 5.4V3.9a.6.6 0 0 1 .6-.5H12.9a.6.6 0 0 1 .6.5V5.6" fill="#f5d57f" stroke="#d3a853"/><rect x="1" y="5" width="5" height="1" fill="#fde9ad"/><rect x="7" y="6" width="6" height="1" fill="#fde6a2"/><rect x="8.6" y="4" width="2.4" height="1" fill="#fff"/><rect x="11" y="4" width="1.8" height="1" fill="#4d8fe3"/><rect x="1" y="14" width="12" height="1" fill="#efc86a"/></svg></div><div class="tt" style="top:397px;left:114.5px;letter-spacing:-0.183px">Public Key Policies</div><div class="exp" style="top:420.5px;left:79.2px"><svg width="7" height="10" viewBox="0 0 7 10" ><path d="M1.3 0.9L5.2 4.7L1.3 8.5" fill="none" stroke="#7d7d7d" stroke-width="1.5"/></svg></div><div class="ico" style="top:414px;left:94px"><svg width="20" height="18" viewBox="0 0 20 18" ><path d="M0.5 15.5V4.9a.7.7 0 0 1 .7-.7H5.6L6.8 5.5H13.5V15.5Z" fill="#f9db86" stroke="#d3a853"/><path d="M6.6 5.4V3.9a.6.6 0 0 1 .6-.5H12.9a.6.6 0 0 1 .6.5V5.6" fill="#f5d57f" stroke="#d3a853"/><rect x="1" y="5" width="5" height="1" fill="#fde9ad"/><rect x="7" y="6" width="6" height="1" fill="#fde6a2"/><rect x="8.6" y="4" width="2.4" height="1" fill="#fff"/><rect x="11" y="4" width="1.8" height="1" fill="#4d8fe3"/><rect x="1" y="14" width="12" height="1" fill="#efc86a"/></svg></div><div class="tt" style="top:415px;left:114.5px;letter-spacing:-0.121px">Software Restriction Policies</div><div class="exp" style="top:438.5px;left:79.2px"><svg width="7" height="10" viewBox="0 0 7 10" ><path d="M1.3 0.9L5.2 4.7L1.3 8.5" fill="none" stroke="#7d7d7d" stroke-width="1.5"/></svg></div><div class="ico" style="top:432px;left:94px"><svg width="20" height="18" viewBox="0 0 20 18" ><path d="M0.5 15.5V4.9a.7.7 0 0 1 .7-.7H5.6L6.8 5.5H13.5V15.5Z" fill="#f9db86" stroke="#d3a853"/><path d="M6.6 5.4V3.9a.6.6 0 0 1 .6-.5H12.9a.6.6 0 0 1 .6.5V5.6" fill="#f5d57f" stroke="#d3a853"/><rect x="1" y="5" width="5" height="1" fill="#fde9ad"/><rect x="7" y="6" width="6" height="1" fill="#fde6a2"/><rect x="8.6" y="4" width="2.4" height="1" fill="#fff"/><rect x="11" y="4" width="1.8" height="1" fill="#4d8fe3"/><rect x="1" y="14" width="12" height="1" fill="#efc86a"/></svg></div><div class="tt" style="top:433px;left:114.5px;letter-spacing:0.067px">Application Control Policies</div><div class="exp" style="top:456.5px;left:79.2px"><svg width="7" height="10" viewBox="0 0 7 10" ><path d="M1.3 0.9L5.2 4.7L1.3 8.5" fill="none" stroke="#7d7d7d" stroke-width="1.5"/></svg></div><div class="ico" style="top:450px;left:94px"><svg width="20" height="19" viewBox="0 0 20 19" ><rect x="3" y="2.5" width="10" height="10" rx="1.5" fill="#cfcfcf" stroke="#222" stroke-width="1"/><rect x="5" y="4.8" width="6.5" height="4.6" fill="#1313e8" stroke="#111" stroke-width=".6"/><rect x="6.2" y="6.6" width="4" height="0.9" fill="#2a9a8a"/><path d="M2.5 13.5H14.5L15.5 11.5V15.5H2.5Z" fill="#cfcfcf" stroke="#111" stroke-width="1"/><path d="M3 7L10 16.5" stroke="#f2e21a" stroke-width="2.2"/><circle cx="3.2" cy="7" r="2.2" fill="#f2e21a"/><circle cx="3.3" cy="6.8" r="0.8" fill="#b9b9d9"/></svg></div><div class="tt" style="top:451px;left:114.5px;letter-spacing:-0.1px">IP Security Policies on Active Directory</div><div class="exp" style="top:474.5px;left:79.2px"><svg width="7" height="10" viewBox="0 0 7 10" ><path d="M1.3 0.9L5.2 4.7L1.3 8.5" fill="none" stroke="#7d7d7d" stroke-width="1.5"/></svg></div><div class="ico" style="top:468px;left:94px"><svg width="20" height="18" viewBox="0 0 20 18" ><path d="M0.5 15.5V4.9a.7.7 0 0 1 .7-.7H5.6L6.8 5.5H13.5V15.5Z" fill="#f9db86" stroke="#d3a853"/><path d="M6.6 5.4V3.9a.6.6 0 0 1 .6-.5H12.9a.6.6 0 0 1 .6.5V5.6" fill="#f5d57f" stroke="#d3a853"/><rect x="1" y="5" width="5" height="1" fill="#fde9ad"/><rect x="7" y="6" width="6" height="1" fill="#fde6a2"/><rect x="8.6" y="4" width="2.4" height="1" fill="#fff"/><rect x="11" y="4" width="1.8" height="1" fill="#4d8fe3"/><rect x="1" y="14" width="12" height="1" fill="#efc86a"/></svg></div><div class="tt" style="top:469px;left:114.5px;letter-spacing:0.126px">Advanced Audit Policy Configuration</div><div class="exp" style="top:492.5px;left:60.2px"><svg width="7" height="10" viewBox="0 0 7 10" ><path d="M1.3 0.9L5.2 4.7L1.3 8.5" fill="none" stroke="#7d7d7d" stroke-width="1.5"/></svg></div><div class="ico" style="top:486px;left:75px"><svg width="20" height="19" viewBox="0 0 20 19" ><rect x="1" y="12.5" width="3" height="6.5" fill="#111"/><rect x="0" y="12" width="3" height="6.5" fill="#2e9ce6"/><rect x="5" y="3.5" width="3" height="15.5" fill="#111"/><rect x="4" y="3" width="3" height="15.5" fill="#5cc84e"/><rect x="9" y="8.5" width="3" height="10.5" fill="#111"/><rect x="8" y="8" width="3" height="10.5" fill="#f7875a"/><rect x="13" y="9.5" width="3" height="9.5" fill="#111"/><rect x="12" y="9" width="3" height="9.5" fill="#2e9ce6"/></svg></div><div class="tt" style="top:487px;left:95.5px;letter-spacing:-0.127px">Policy-based QoS</div><div class="exp" style="top:510.5px;left:41.2px"><svg width="7" height="10" viewBox="0 0 7 10" ><path d="M1.3 0.9L5.2 4.7L1.3 8.5" fill="none" stroke="#7d7d7d" stroke-width="1.5"/></svg></div><div class="ico" style="top:504px;left:56px"><svg width="20" height="18" viewBox="0 0 20 18" ><path d="M0.5 15.5V4.9a.7.7 0 0 1 .7-.7H5.6L6.8 5.5H13.5V15.5Z" fill="#f9db86" stroke="#d3a853"/><path d="M6.6 5.4V3.9a.6.6 0 0 1 .6-.5H12.9a.6.6 0 0 1 .6.5V5.6" fill="#f5d57f" stroke="#d3a853"/><rect x="1" y="5" width="5" height="1" fill="#fde9ad"/><rect x="7" y="6" width="6" height="1" fill="#fde6a2"/><rect x="8.6" y="4" width="2.4" height="1" fill="#fff"/><rect x="11" y="4" width="1.8" height="1" fill="#4d8fe3"/><rect x="1" y="14" width="12" height="1" fill="#efc86a"/></svg></div><div class="tt" style="top:505px;left:76.5px;letter-spacing:0.059px">Administrative Templates: Policy definitions (ADMX files)</div><div class="exp" style="top:528.5px;left:22.2px"><svg width="7" height="10" viewBox="0 0 7 10" ><path d="M1.3 0.9L5.2 4.7L1.3 8.5" fill="none" stroke="#7d7d7d" stroke-width="1.5"/></svg></div><div class="ico" style="top:522px;left:37px"><svg width="20" height="18" viewBox="0 0 20 18" ><path d="M0.5 15.5V4.9a.7.7 0 0 1 .7-.7H5.6L6.8 5.5H13.5V15.5Z" fill="#f9db86" stroke="#d3a853"/><path d="M6.6 5.4V3.9a.6.6 0 0 1 .6-.5H12.9a.6.6 0 0 1 .6.5V5.6" fill="#f5d57f" stroke="#d3a853"/><rect x="1" y="5" width="5" height="1" fill="#fde9ad"/><rect x="7" y="6" width="6" height="1" fill="#fde6a2"/><rect x="8.6" y="4" width="2.4" height="1" fill="#fff"/><rect x="11" y="4" width="1.8" height="1" fill="#4d8fe3"/><rect x="1" y="14" width="12" height="1" fill="#efc86a"/></svg></div><div class="tt" style="top:523px;left:57.5px;letter-spacing:-0.34px">Preferences</div><div class="exp" style="top:547.5px;left:1px"><svg width="11" height="6" viewBox="0 0 11 6" ><path d="M1.1 0.9L5.5 4.6L9.9 0.9" fill="none" stroke="#262626" stroke-width="1.45"/></svg></div><div class="ico" style="top:540px;left:18px"><svg width="20" height="18" viewBox="0 0 20 18" ><path d="M5.2 16.5C4.8 12 6.5 9.2 9.8 9.2S14.8 12 14.6 16.5Z" fill="#a9cdef" stroke="#6c9fd0" stroke-width=".8"/><path d="M8.6 9.3L9.8 12.5L11 9.3Z" fill="#b8342a"/><ellipse cx="9.8" cy="6.3" rx="2.2" ry="2.7" fill="#c0904c"/><path d="M7.5 6C7.3 3.4 8.5 2.9 9.8 2.9S12.3 3.4 12.1 6L11.4 4.6H8.2Z" fill="#222"/><path d="M1.5 9.5V16H3.8V9.5" fill="#eef2f8" stroke="#4c6fb8" stroke-width="1"/><path d="M0.6 7L1.6 9.5H3.8L4.8 7" fill="none" stroke="#8f8f8f" stroke-width="1"/></svg></div><div class="tt" style="top:541px;left:38.5px;letter-spacing:0.029px">User Configuration</div><div class="exp" style="top:564.5px;left:22.2px"><svg width="7" height="10" viewBox="0 0 7 10" ><path d="M1.3 0.9L5.2 4.7L1.3 8.5" fill="none" stroke="#7d7d7d" stroke-width="1.5"/></svg></div><div class="ico" style="top:558px;left:37px"><svg width="20" height="18" viewBox="0 0 20 18" ><path d="M0.5 15.5V4.9a.7.7 0 0 1 .7-.7H5.6L6.8 5.5H13.5V15.5Z" fill="#f9db86" stroke="#d3a853"/><path d="M6.6 5.4V3.9a.6.6 0 0 1 .6-.5H12.9a.6.6 0 0 1 .6.5V5.6" fill="#f5d57f" stroke="#d3a853"/><rect x="1" y="5" width="5" height="1" fill="#fde9ad"/><rect x="7" y="6" width="6" height="1" fill="#fde6a2"/><rect x="8.6" y="4" width="2.4" height="1" fill="#fff"/><rect x="11" y="4" width="1.8" height="1" fill="#4d8fe3"/><rect x="1" y="14" width="12" height="1" fill="#efc86a"/></svg></div><div class="tt" style="top:559px;left:57.5px;letter-spacing:-0.043px">Policies</div><div class="exp" style="top:582.5px;left:22.2px"><svg width="7" height="10" viewBox="0 0 7 10" ><path d="M1.3 0.9L5.2 4.7L1.3 8.5" fill="none" stroke="#7d7d7d" stroke-width="1.5"/></svg></div><div class="ico" style="top:576px;left:37px"><svg width="20" height="18" viewBox="0 0 20 18" ><path d="M0.5 15.5V4.9a.7.7 0 0 1 .7-.7H5.6L6.8 5.5H13.5V15.5Z" fill="#f9db86" stroke="#d3a853"/><path d="M6.6 5.4V3.9a.6.6 0 0 1 .6-.5H12.9a.6.6 0 0 1 .6.5V5.6" fill="#f5d57f" stroke="#d3a853"/><rect x="1" y="5" width="5" height="1" fill="#fde9ad"/><rect x="7" y="6" width="6" height="1" fill="#fde6a2"/><rect x="8.6" y="4" width="2.4" height="1" fill="#fff"/><rect x="11" y="4" width="1.8" height="1" fill="#4d8fe3"/><rect x="1" y="14" width="12" height="1" fill="#efc86a"/></svg></div><div class="tt" style="top:577px;left:57.5px;letter-spacing:-0.34px">Preferences</div></div><div id="hscroll"><div id="hthumb"></div></div></div><div id="list"><div class="hdr" style="left:7px;top:4px">Policy</div><div class="hdr" style="left:357px;top:4px">Policy Setting</div><div id="coldiv"></div><div id="sortarrow"><svg width="9" height="6" viewBox="0 0 9 6" ><path d="M0.8 4.8L4.2 1.3L7.6 4.8" fill="none" stroke="#555" stroke-width="1.1"/></svg></div><div class="lico" style="top:27px"><svg width="14" height="16" viewBox="0 0 14 16" ><rect x="1" y="1" width="11" height="11" fill="#ffffff"/><rect x="11" y="3" width="1" height="10" fill="#ffffff"/><rect x="0" y="0" width="1" height="12" fill="#a9a9a9"/><rect x="0" y="0" width="10" height="1" fill="#a9a9a9"/><rect x="10" y="1" width="1" height="1" fill="#a9a9a9"/><rect x="11" y="2" width="1" height="1" fill="#a9a9a9"/><rect x="12" y="3" width="1" height="12" fill="#a9a9a9"/><rect x="9" y="1" width="1" height="2" fill="#e2e2e2"/><rect x="10" y="2" width="1" height="1" fill="#d0d0d0"/><rect x="9" y="3" width="3" height="1" fill="#e6e6e6"/><rect x="0" y="11" width="10" height="1" fill="#a9a9a9"/><rect x="1" y="12" width="2" height="1" fill="#b5b5b5"/><rect x="3" y="12" width="5" height="2" fill="#a2a2a2"/><rect x="8" y="12" width="2" height="1" fill="#b5b5b5"/><rect x="10" y="12" width="1" height="1" fill="#a9a9a9"/><rect x="10" y="13" width="2" height="1" fill="#a9a9a9"/><rect x="11" y="14" width="1" height="1" fill="#9a9a9a"/><rect x="2" y="2" width="1" height="4" fill="#8f8bb8"/><rect x="5" y="2" width="1" height="1" fill="#8f8bb8"/><rect x="4" y="3" width="1" height="2" fill="#8f8bb8"/><rect x="6" y="3" width="1" height="2" fill="#8f8bb8"/><rect x="5" y="5" width="1" height="1" fill="#8f8bb8"/><rect x="3" y="7" width="1" height="1" fill="#8f8bb8"/><rect x="2" y="8" width="1" height="2" fill="#8f8bb8"/><rect x="4" y="8" width="1" height="2" fill="#8f8bb8"/><rect x="3" y="10" width="1" height="1" fill="#8f8bb8"/><rect x="6" y="7" width="1" height="4" fill="#8f8bb8"/><rect x="9" y="7" width="1" height="1" fill="#8f8bb8"/><rect x="8" y="8" width="1" height="2" fill="#8f8bb8"/><rect x="10" y="8" width="1" height="2" fill="#8f8bb8"/><rect x="9" y="10" width="1" height="1" fill="#8f8bb8"/></svg></div><div class="lt" style="top:26px;letter-spacing:0.035px">Accounts: Administrator account status</div><div class="lv" style="top:26px">Not Defined</div><div class="lico" style="top:46px"><svg width="14" height="16" viewBox="0 0 14 16" ><rect x="1" y="1" width="11" height="11" fill="#ffffff"/><rect x="11" y="3" width="1" height="10" fill="#ffffff"/><rect x="0" y="0" width="1" height="12" fill="#a9a9a9"/><rect x="0" y="0" width="10" height="1" fill="#a9a9a9"/><rect x="10" y="1" width="1" height="1" fill="#a9a9a9"/><rect x="11" y="2" width="1" height="1" fill="#a9a9a9"/><rect x="12" y="3" width="1" height="12" fill="#a9a9a9"/><rect x="9" y="1" width="1" height="2" fill="#e2e2e2"/><rect x="10" y="2" width="1" height="1" fill="#d0d0d0"/><rect x="9" y="3" width="3" height="1" fill="#e6e6e6"/><rect x="0" y="11" width="10" height="1" fill="#a9a9a9"/><rect x="1" y="12" width="2" height="1" fill="#b5b5b5"/><rect x="3" y="12" width="5" height="2" fill="#a2a2a2"/><rect x="8" y="12" width="2" height="1" fill="#b5b5b5"/><rect x="10" y="12" width="1" height="1" fill="#a9a9a9"/><rect x="10" y="13" width="2" height="1" fill="#a9a9a9"/><rect x="11" y="14" width="1" height="1" fill="#9a9a9a"/><rect x="2" y="2" width="1" height="4" fill="#8f8bb8"/><rect x="5" y="2" width="1" height="1" fill="#8f8bb8"/><rect x="4" y="3" width="1" height="2" fill="#8f8bb8"/><rect x="6" y="3" width="1" height="2" fill="#8f8bb8"/><rect x="5" y="5" width="1" height="1" fill="#8f8bb8"/><rect x="3" y="7" width="1" height="1" fill="#8f8bb8"/><rect x="2" y="8" width="1" height="2" fill="#8f8bb8"/><rect x="4" y="8" width="1" height="2" fill="#8f8bb8"/><rect x="3" y="10" width="1" height="1" fill="#8f8bb8"/><rect x="6" y="7" width="1" height="4" fill="#8f8bb8"/><rect x="9" y="7" width="1" height="1" fill="#8f8bb8"/><rect x="8" y="8" width="1" height="2" fill="#8f8bb8"/><rect x="10" y="8" width="1" height="2" fill="#8f8bb8"/><rect x="9" y="10" width="1" height="1" fill="#8f8bb8"/></svg></div><div class="lt" style="top:45px;letter-spacing:0.015px">Accounts: Block Microsoft accounts</div><div class="lv" style="top:45px">Not Defined</div><div class="lico" style="top:65px"><svg width="14" height="16" viewBox="0 0 14 16" ><rect x="1" y="1" width="11" height="11" fill="#ffffff"/><rect x="11" y="3" width="1" height="10" fill="#ffffff"/><rect x="0" y="0" width="1" height="12" fill="#a9a9a9"/><rect x="0" y="0" width="10" height="1" fill="#a9a9a9"/><rect x="10" y="1" width="1" height="1" fill="#a9a9a9"/><rect x="11" y="2" width="1" height="1" fill="#a9a9a9"/><rect x="12" y="3" width="1" height="12" fill="#a9a9a9"/><rect x="9" y="1" width="1" height="2" fill="#e2e2e2"/><rect x="10" y="2" width="1" height="1" fill="#d0d0d0"/><rect x="9" y="3" width="3" height="1" fill="#e6e6e6"/><rect x="0" y="11" width="10" height="1" fill="#a9a9a9"/><rect x="1" y="12" width="2" height="1" fill="#b5b5b5"/><rect x="3" y="12" width="5" height="2" fill="#a2a2a2"/><rect x="8" y="12" width="2" height="1" fill="#b5b5b5"/><rect x="10" y="12" width="1" height="1" fill="#a9a9a9"/><rect x="10" y="13" width="2" height="1" fill="#a9a9a9"/><rect x="11" y="14" width="1" height="1" fill="#9a9a9a"/><rect x="2" y="2" width="1" height="4" fill="#8f8bb8"/><rect x="5" y="2" width="1" height="1" fill="#8f8bb8"/><rect x="4" y="3" width="1" height="2" fill="#8f8bb8"/><rect x="6" y="3" width="1" height="2" fill="#8f8bb8"/><rect x="5" y="5" width="1" height="1" fill="#8f8bb8"/><rect x="3" y="7" width="1" height="1" fill="#8f8bb8"/><rect x="2" y="8" width="1" height="2" fill="#8f8bb8"/><rect x="4" y="8" width="1" height="2" fill="#8f8bb8"/><rect x="3" y="10" width="1" height="1" fill="#8f8bb8"/><rect x="6" y="7" width="1" height="4" fill="#8f8bb8"/><rect x="9" y="7" width="1" height="1" fill="#8f8bb8"/><rect x="8" y="8" width="1" height="2" fill="#8f8bb8"/><rect x="10" y="8" width="1" height="2" fill="#8f8bb8"/><rect x="9" y="10" width="1" height="1" fill="#8f8bb8"/></svg></div><div class="lt" style="top:64px;letter-spacing:-0.107px">Accounts: Guest account status</div><div class="lv" style="top:64px">Not Defined</div><div class="lico" style="top:84px"><svg width="14" height="16" viewBox="0 0 14 16" ><rect x="1" y="1" width="11" height="11" fill="#ffffff"/><rect x="11" y="3" width="1" height="10" fill="#ffffff"/><rect x="0" y="0" width="1" height="12" fill="#a9a9a9"/><rect x="0" y="0" width="10" height="1" fill="#a9a9a9"/><rect x="10" y="1" width="1" height="1" fill="#a9a9a9"/><rect x="11" y="2" width="1" height="1" fill="#a9a9a9"/><rect x="12" y="3" width="1" height="12" fill="#a9a9a9"/><rect x="9" y="1" width="1" height="2" fill="#e2e2e2"/><rect x="10" y="2" width="1" height="1" fill="#d0d0d0"/><rect x="9" y="3" width="3" height="1" fill="#e6e6e6"/><rect x="0" y="11" width="10" height="1" fill="#a9a9a9"/><rect x="1" y="12" width="2" height="1" fill="#b5b5b5"/><rect x="3" y="12" width="5" height="2" fill="#a2a2a2"/><rect x="8" y="12" width="2" height="1" fill="#b5b5b5"/><rect x="10" y="12" width="1" height="1" fill="#a9a9a9"/><rect x="10" y="13" width="2" height="1" fill="#a9a9a9"/><rect x="11" y="14" width="1" height="1" fill="#9a9a9a"/><rect x="2" y="2" width="1" height="4" fill="#8f8bb8"/><rect x="5" y="2" width="1" height="1" fill="#8f8bb8"/><rect x="4" y="3" width="1" height="2" fill="#8f8bb8"/><rect x="6" y="3" width="1" height="2" fill="#8f8bb8"/><rect x="5" y="5" width="1" height="1" fill="#8f8bb8"/><rect x="3" y="7" width="1" height="1" fill="#8f8bb8"/><rect x="2" y="8" width="1" height="2" fill="#8f8bb8"/><rect x="4" y="8" width="1" height="2" fill="#8f8bb8"/><rect x="3" y="10" width="1" height="1" fill="#8f8bb8"/><rect x="6" y="7" width="1" height="4" fill="#8f8bb8"/><rect x="9" y="7" width="1" height="1" fill="#8f8bb8"/><rect x="8" y="8" width="1" height="2" fill="#8f8bb8"/><rect x="10" y="8" width="1" height="2" fill="#8f8bb8"/><rect x="9" y="10" width="1" height="1" fill="#8f8bb8"/></svg></div><div class="lt" style="top:83px;letter-spacing:-0.025px">Accounts: Limit local account use of blank passwords to co...</div><div class="lv" style="top:83px">Not Defined</div><div class="lico" style="top:103px"><svg width="14" height="16" viewBox="0 0 14 16" ><rect x="1" y="1" width="11" height="11" fill="#ffffff"/><rect x="11" y="3" width="1" height="10" fill="#ffffff"/><rect x="0" y="0" width="1" height="12" fill="#a9a9a9"/><rect x="0" y="0" width="10" height="1" fill="#a9a9a9"/><rect x="10" y="1" width="1" height="1" fill="#a9a9a9"/><rect x="11" y="2" width="1" height="1" fill="#a9a9a9"/><rect x="12" y="3" width="1" height="12" fill="#a9a9a9"/><rect x="9" y="1" width="1" height="2" fill="#e2e2e2"/><rect x="10" y="2" width="1" height="1" fill="#d0d0d0"/><rect x="9" y="3" width="3" height="1" fill="#e6e6e6"/><rect x="0" y="11" width="10" height="1" fill="#a9a9a9"/><rect x="1" y="12" width="2" height="1" fill="#b5b5b5"/><rect x="3" y="12" width="5" height="2" fill="#a2a2a2"/><rect x="8" y="12" width="2" height="1" fill="#b5b5b5"/><rect x="10" y="12" width="1" height="1" fill="#a9a9a9"/><rect x="10" y="13" width="2" height="1" fill="#a9a9a9"/><rect x="11" y="14" width="1" height="1" fill="#9a9a9a"/><rect x="2" y="2" width="1" height="4" fill="#8f8bb8"/><rect x="5" y="2" width="1" height="1" fill="#8f8bb8"/><rect x="4" y="3" width="1" height="2" fill="#8f8bb8"/><rect x="6" y="3" width="1" height="2" fill="#8f8bb8"/><rect x="5" y="5" width="1" height="1" fill="#8f8bb8"/><rect x="3" y="7" width="1" height="1" fill="#8f8bb8"/><rect x="2" y="8" width="1" height="2" fill="#8f8bb8"/><rect x="4" y="8" width="1" height="2" fill="#8f8bb8"/><rect x="3" y="10" width="1" height="1" fill="#8f8bb8"/><rect x="6" y="7" width="1" height="4" fill="#8f8bb8"/><rect x="9" y="7" width="1" height="1" fill="#8f8bb8"/><rect x="8" y="8" width="1" height="2" fill="#8f8bb8"/><rect x="10" y="8" width="1" height="2" fill="#8f8bb8"/><rect x="9" y="10" width="1" height="1" fill="#8f8bb8"/></svg></div><div class="lt" style="top:102px;letter-spacing:-0.035px">Accounts: Rename administrator account</div><div class="lv" style="top:102px">Not Defined</div><div class="lico" style="top:122px"><svg width="14" height="16" viewBox="0 0 14 16" ><rect x="1" y="1" width="11" height="11" fill="#ffffff"/><rect x="11" y="3" width="1" height="10" fill="#ffffff"/><rect x="0" y="0" width="1" height="12" fill="#a9a9a9"/><rect x="0" y="0" width="10" height="1" fill="#a9a9a9"/><rect x="10" y="1" width="1" height="1" fill="#a9a9a9"/><rect x="11" y="2" width="1" height="1" fill="#a9a9a9"/><rect x="12" y="3" width="1" height="12" fill="#a9a9a9"/><rect x="9" y="1" width="1" height="2" fill="#e2e2e2"/><rect x="10" y="2" width="1" height="1" fill="#d0d0d0"/><rect x="9" y="3" width="3" height="1" fill="#e6e6e6"/><rect x="0" y="11" width="10" height="1" fill="#a9a9a9"/><rect x="1" y="12" width="2" height="1" fill="#b5b5b5"/><rect x="3" y="12" width="5" height="2" fill="#a2a2a2"/><rect x="8" y="12" width="2" height="1" fill="#b5b5b5"/><rect x="10" y="12" width="1" height="1" fill="#a9a9a9"/><rect x="10" y="13" width="2" height="1" fill="#a9a9a9"/><rect x="11" y="14" width="1" height="1" fill="#9a9a9a"/><rect x="2" y="2" width="1" height="4" fill="#8f8bb8"/><rect x="5" y="2" width="1" height="1" fill="#8f8bb8"/><rect x="4" y="3" width="1" height="2" fill="#8f8bb8"/><rect x="6" y="3" width="1" height="2" fill="#8f8bb8"/><rect x="5" y="5" width="1" height="1" fill="#8f8bb8"/><rect x="3" y="7" width="1" height="1" fill="#8f8bb8"/><rect x="2" y="8" width="1" height="2" fill="#8f8bb8"/><rect x="4" y="8" width="1" height="2" fill="#8f8bb8"/><rect x="3" y="10" width="1" height="1" fill="#8f8bb8"/><rect x="6" y="7" width="1" height="4" fill="#8f8bb8"/><rect x="9" y="7" width="1" height="1" fill="#8f8bb8"/><rect x="8" y="8" width="1" height="2" fill="#8f8bb8"/><rect x="10" y="8" width="1" height="2" fill="#8f8bb8"/><rect x="9" y="10" width="1" height="1" fill="#8f8bb8"/></svg></div><div class="lt" style="top:121px;letter-spacing:-0.117px">Accounts: Rename guest account</div><div class="lv" style="top:121px">Not Defined</div><div class="lico" style="top:141px"><svg width="14" height="16" viewBox="0 0 14 16" ><rect x="1" y="1" width="11" height="11" fill="#ffffff"/><rect x="11" y="3" width="1" height="10" fill="#ffffff"/><rect x="0" y="0" width="1" height="12" fill="#a9a9a9"/><rect x="0" y="0" width="10" height="1" fill="#a9a9a9"/><rect x="10" y="1" width="1" height="1" fill="#a9a9a9"/><rect x="11" y="2" width="1" height="1" fill="#a9a9a9"/><rect x="12" y="3" width="1" height="12" fill="#a9a9a9"/><rect x="9" y="1" width="1" height="2" fill="#e2e2e2"/><rect x="10" y="2" width="1" height="1" fill="#d0d0d0"/><rect x="9" y="3" width="3" height="1" fill="#e6e6e6"/><rect x="0" y="11" width="10" height="1" fill="#a9a9a9"/><rect x="1" y="12" width="2" height="1" fill="#b5b5b5"/><rect x="3" y="12" width="5" height="2" fill="#a2a2a2"/><rect x="8" y="12" width="2" height="1" fill="#b5b5b5"/><rect x="10" y="12" width="1" height="1" fill="#a9a9a9"/><rect x="10" y="13" width="2" height="1" fill="#a9a9a9"/><rect x="11" y="14" width="1" height="1" fill="#9a9a9a"/><rect x="2" y="2" width="1" height="4" fill="#8f8bb8"/><rect x="5" y="2" width="1" height="1" fill="#8f8bb8"/><rect x="4" y="3" width="1" height="2" fill="#8f8bb8"/><rect x="6" y="3" width="1" height="2" fill="#8f8bb8"/><rect x="5" y="5" width="1" height="1" fill="#8f8bb8"/><rect x="3" y="7" width="1" height="1" fill="#8f8bb8"/><rect x="2" y="8" width="1" height="2" fill="#8f8bb8"/><rect x="4" y="8" width="1" height="2" fill="#8f8bb8"/><rect x="3" y="10" width="1" height="1" fill="#8f8bb8"/><rect x="6" y="7" width="1" height="4" fill="#8f8bb8"/><rect x="9" y="7" width="1" height="1" fill="#8f8bb8"/><rect x="8" y="8" width="1" height="2" fill="#8f8bb8"/><rect x="10" y="8" width="1" height="2" fill="#8f8bb8"/><rect x="9" y="10" width="1" height="1" fill="#8f8bb8"/></svg></div><div class="lt" style="top:140px;letter-spacing:-0.032px">Audit: Audit the access of global system objects</div><div class="lv" style="top:140px">Not Defined</div><div class="lico" style="top:160px"><svg width="14" height="16" viewBox="0 0 14 16" ><rect x="1" y="1" width="11" height="11" fill="#ffffff"/><rect x="11" y="3" width="1" height="10" fill="#ffffff"/><rect x="0" y="0" width="1" height="12" fill="#a9a9a9"/><rect x="0" y="0" width="10" height="1" fill="#a9a9a9"/><rect x="10" y="1" width="1" height="1" fill="#a9a9a9"/><rect x="11" y="2" width="1" height="1" fill="#a9a9a9"/><rect x="12" y="3" width="1" height="12" fill="#a9a9a9"/><rect x="9" y="1" width="1" height="2" fill="#e2e2e2"/><rect x="10" y="2" width="1" height="1" fill="#d0d0d0"/><rect x="9" y="3" width="3" height="1" fill="#e6e6e6"/><rect x="0" y="11" width="10" height="1" fill="#a9a9a9"/><rect x="1" y="12" width="2" height="1" fill="#b5b5b5"/><rect x="3" y="12" width="5" height="2" fill="#a2a2a2"/><rect x="8" y="12" width="2" height="1" fill="#b5b5b5"/><rect x="10" y="12" width="1" height="1" fill="#a9a9a9"/><rect x="10" y="13" width="2" height="1" fill="#a9a9a9"/><rect x="11" y="14" width="1" height="1" fill="#9a9a9a"/><rect x="2" y="2" width="1" height="4" fill="#8f8bb8"/><rect x="5" y="2" width="1" height="1" fill="#8f8bb8"/><rect x="4" y="3" width="1" height="2" fill="#8f8bb8"/><rect x="6" y="3" width="1" height="2" fill="#8f8bb8"/><rect x="5" y="5" width="1" height="1" fill="#8f8bb8"/><rect x="3" y="7" width="1" height="1" fill="#8f8bb8"/><rect x="2" y="8" width="1" height="2" fill="#8f8bb8"/><rect x="4" y="8" width="1" height="2" fill="#8f8bb8"/><rect x="3" y="10" width="1" height="1" fill="#8f8bb8"/><rect x="6" y="7" width="1" height="4" fill="#8f8bb8"/><rect x="9" y="7" width="1" height="1" fill="#8f8bb8"/><rect x="8" y="8" width="1" height="2" fill="#8f8bb8"/><rect x="10" y="8" width="1" height="2" fill="#8f8bb8"/><rect x="9" y="10" width="1" height="1" fill="#8f8bb8"/></svg></div><div class="lt" style="top:159px;letter-spacing:-0.067px">Audit: Audit the use of Backup and Restore privilege</div><div class="lv" style="top:159px">Not Defined</div><div class="lico" style="top:179px"><svg width="14" height="16" viewBox="0 0 14 16" ><rect x="1" y="1" width="11" height="11" fill="#ffffff"/><rect x="11" y="3" width="1" height="10" fill="#ffffff"/><rect x="0" y="0" width="1" height="12" fill="#a9a9a9"/><rect x="0" y="0" width="10" height="1" fill="#a9a9a9"/><rect x="10" y="1" width="1" height="1" fill="#a9a9a9"/><rect x="11" y="2" width="1" height="1" fill="#a9a9a9"/><rect x="12" y="3" width="1" height="12" fill="#a9a9a9"/><rect x="9" y="1" width="1" height="2" fill="#e2e2e2"/><rect x="10" y="2" width="1" height="1" fill="#d0d0d0"/><rect x="9" y="3" width="3" height="1" fill="#e6e6e6"/><rect x="0" y="11" width="10" height="1" fill="#a9a9a9"/><rect x="1" y="12" width="2" height="1" fill="#b5b5b5"/><rect x="3" y="12" width="5" height="2" fill="#a2a2a2"/><rect x="8" y="12" width="2" height="1" fill="#b5b5b5"/><rect x="10" y="12" width="1" height="1" fill="#a9a9a9"/><rect x="10" y="13" width="2" height="1" fill="#a9a9a9"/><rect x="11" y="14" width="1" height="1" fill="#9a9a9a"/><rect x="2" y="2" width="1" height="4" fill="#8f8bb8"/><rect x="5" y="2" width="1" height="1" fill="#8f8bb8"/><rect x="4" y="3" width="1" height="2" fill="#8f8bb8"/><rect x="6" y="3" width="1" height="2" fill="#8f8bb8"/><rect x="5" y="5" width="1" height="1" fill="#8f8bb8"/><rect x="3" y="7" width="1" height="1" fill="#8f8bb8"/><rect x="2" y="8" width="1" height="2" fill="#8f8bb8"/><rect x="4" y="8" width="1" height="2" fill="#8f8bb8"/><rect x="3" y="10" width="1" height="1" fill="#8f8bb8"/><rect x="6" y="7" width="1" height="4" fill="#8f8bb8"/><rect x="9" y="7" width="1" height="1" fill="#8f8bb8"/><rect x="8" y="8" width="1" height="2" fill="#8f8bb8"/><rect x="10" y="8" width="1" height="2" fill="#8f8bb8"/><rect x="9" y="10" width="1" height="1" fill="#8f8bb8"/></svg></div><div class="lt" style="top:178px;letter-spacing:-0.056px">Audit: Force audit policy subcategory settings (Windows Vis...</div><div class="lv" style="top:178px">Not Defined</div><div class="lico" style="top:198px"><svg width="14" height="16" viewBox="0 0 14 16" ><rect x="1" y="1" width="11" height="11" fill="#ffffff"/><rect x="11" y="3" width="1" height="10" fill="#ffffff"/><rect x="0" y="0" width="1" height="12" fill="#a9a9a9"/><rect x="0" y="0" width="10" height="1" fill="#a9a9a9"/><rect x="10" y="1" width="1" height="1" fill="#a9a9a9"/><rect x="11" y="2" width="1" height="1" fill="#a9a9a9"/><rect x="12" y="3" width="1" height="12" fill="#a9a9a9"/><rect x="9" y="1" width="1" height="2" fill="#e2e2e2"/><rect x="10" y="2" width="1" height="1" fill="#d0d0d0"/><rect x="9" y="3" width="3" height="1" fill="#e6e6e6"/><rect x="0" y="11" width="10" height="1" fill="#a9a9a9"/><rect x="1" y="12" width="2" height="1" fill="#b5b5b5"/><rect x="3" y="12" width="5" height="2" fill="#a2a2a2"/><rect x="8" y="12" width="2" height="1" fill="#b5b5b5"/><rect x="10" y="12" width="1" height="1" fill="#a9a9a9"/><rect x="10" y="13" width="2" height="1" fill="#a9a9a9"/><rect x="11" y="14" width="1" height="1" fill="#9a9a9a"/><rect x="2" y="2" width="1" height="4" fill="#8f8bb8"/><rect x="5" y="2" width="1" height="1" fill="#8f8bb8"/><rect x="4" y="3" width="1" height="2" fill="#8f8bb8"/><rect x="6" y="3" width="1" height="2" fill="#8f8bb8"/><rect x="5" y="5" width="1" height="1" fill="#8f8bb8"/><rect x="3" y="7" width="1" height="1" fill="#8f8bb8"/><rect x="2" y="8" width="1" height="2" fill="#8f8bb8"/><rect x="4" y="8" width="1" height="2" fill="#8f8bb8"/><rect x="3" y="10" width="1" height="1" fill="#8f8bb8"/><rect x="6" y="7" width="1" height="4" fill="#8f8bb8"/><rect x="9" y="7" width="1" height="1" fill="#8f8bb8"/><rect x="8" y="8" width="1" height="2" fill="#8f8bb8"/><rect x="10" y="8" width="1" height="2" fill="#8f8bb8"/><rect x="9" y="10" width="1" height="1" fill="#8f8bb8"/></svg></div><div class="lt" style="top:197px;letter-spacing:0.027px">Audit: Shut down system immediately if unable to log secur...</div><div class="lv" style="top:197px">Not Defined</div><div class="lico" style="top:217px"><svg width="14" height="16" viewBox="0 0 14 16" ><rect x="1" y="1" width="11" height="11" fill="#ffffff"/><rect x="11" y="3" width="1" height="10" fill="#ffffff"/><rect x="0" y="0" width="1" height="12" fill="#a9a9a9"/><rect x="0" y="0" width="10" height="1" fill="#a9a9a9"/><rect x="10" y="1" width="1" height="1" fill="#a9a9a9"/><rect x="11" y="2" width="1" height="1" fill="#a9a9a9"/><rect x="12" y="3" width="1" height="12" fill="#a9a9a9"/><rect x="9" y="1" width="1" height="2" fill="#e2e2e2"/><rect x="10" y="2" width="1" height="1" fill="#d0d0d0"/><rect x="9" y="3" width="3" height="1" fill="#e6e6e6"/><rect x="0" y="11" width="10" height="1" fill="#a9a9a9"/><rect x="1" y="12" width="2" height="1" fill="#b5b5b5"/><rect x="3" y="12" width="5" height="2" fill="#a2a2a2"/><rect x="8" y="12" width="2" height="1" fill="#b5b5b5"/><rect x="10" y="12" width="1" height="1" fill="#a9a9a9"/><rect x="10" y="13" width="2" height="1" fill="#a9a9a9"/><rect x="11" y="14" width="1" height="1" fill="#9a9a9a"/><rect x="2" y="2" width="1" height="4" fill="#8f8bb8"/><rect x="5" y="2" width="1" height="1" fill="#8f8bb8"/><rect x="4" y="3" width="1" height="2" fill="#8f8bb8"/><rect x="6" y="3" width="1" height="2" fill="#8f8bb8"/><rect x="5" y="5" width="1" height="1" fill="#8f8bb8"/><rect x="3" y="7" width="1" height="1" fill="#8f8bb8"/><rect x="2" y="8" width="1" height="2" fill="#8f8bb8"/><rect x="4" y="8" width="1" height="2" fill="#8f8bb8"/><rect x="3" y="10" width="1" height="1" fill="#8f8bb8"/><rect x="6" y="7" width="1" height="4" fill="#8f8bb8"/><rect x="9" y="7" width="1" height="1" fill="#8f8bb8"/><rect x="8" y="8" width="1" height="2" fill="#8f8bb8"/><rect x="10" y="8" width="1" height="2" fill="#8f8bb8"/><rect x="9" y="10" width="1" height="1" fill="#8f8bb8"/></svg></div><div class="lt" style="top:216px;letter-spacing:-0.148px">DCOM: Machine Access Restrictions in Security Descriptor D...</div><div class="lv" style="top:216px">Not Defined</div><div class="lico" style="top:236px"><svg width="14" height="16" viewBox="0 0 14 16" ><rect x="1" y="1" width="11" height="11" fill="#ffffff"/><rect x="11" y="3" width="1" height="10" fill="#ffffff"/><rect x="0" y="0" width="1" height="12" fill="#a9a9a9"/><rect x="0" y="0" width="10" height="1" fill="#a9a9a9"/><rect x="10" y="1" width="1" height="1" fill="#a9a9a9"/><rect x="11" y="2" width="1" height="1" fill="#a9a9a9"/><rect x="12" y="3" width="1" height="12" fill="#a9a9a9"/><rect x="9" y="1" width="1" height="2" fill="#e2e2e2"/><rect x="10" y="2" width="1" height="1" fill="#d0d0d0"/><rect x="9" y="3" width="3" height="1" fill="#e6e6e6"/><rect x="0" y="11" width="10" height="1" fill="#a9a9a9"/><rect x="1" y="12" width="2" height="1" fill="#b5b5b5"/><rect x="3" y="12" width="5" height="2" fill="#a2a2a2"/><rect x="8" y="12" width="2" height="1" fill="#b5b5b5"/><rect x="10" y="12" width="1" height="1" fill="#a9a9a9"/><rect x="10" y="13" width="2" height="1" fill="#a9a9a9"/><rect x="11" y="14" width="1" height="1" fill="#9a9a9a"/><rect x="2" y="2" width="1" height="4" fill="#8f8bb8"/><rect x="5" y="2" width="1" height="1" fill="#8f8bb8"/><rect x="4" y="3" width="1" height="2" fill="#8f8bb8"/><rect x="6" y="3" width="1" height="2" fill="#8f8bb8"/><rect x="5" y="5" width="1" height="1" fill="#8f8bb8"/><rect x="3" y="7" width="1" height="1" fill="#8f8bb8"/><rect x="2" y="8" width="1" height="2" fill="#8f8bb8"/><rect x="4" y="8" width="1" height="2" fill="#8f8bb8"/><rect x="3" y="10" width="1" height="1" fill="#8f8bb8"/><rect x="6" y="7" width="1" height="4" fill="#8f8bb8"/><rect x="9" y="7" width="1" height="1" fill="#8f8bb8"/><rect x="8" y="8" width="1" height="2" fill="#8f8bb8"/><rect x="10" y="8" width="1" height="2" fill="#8f8bb8"/><rect x="9" y="10" width="1" height="1" fill="#8f8bb8"/></svg></div><div class="lt" style="top:235px;letter-spacing:-0.127px">DCOM: Machine Launch Restrictions in Security Descriptor ...</div><div class="lv" style="top:235px">Not Defined</div><div class="lico" style="top:255px"><svg width="14" height="16" viewBox="0 0 14 16" ><rect x="1" y="1" width="11" height="11" fill="#ffffff"/><rect x="11" y="3" width="1" height="10" fill="#ffffff"/><rect x="0" y="0" width="1" height="12" fill="#a9a9a9"/><rect x="0" y="0" width="10" height="1" fill="#a9a9a9"/><rect x="10" y="1" width="1" height="1" fill="#a9a9a9"/><rect x="11" y="2" width="1" height="1" fill="#a9a9a9"/><rect x="12" y="3" width="1" height="12" fill="#a9a9a9"/><rect x="9" y="1" width="1" height="2" fill="#e2e2e2"/><rect x="10" y="2" width="1" height="1" fill="#d0d0d0"/><rect x="9" y="3" width="3" height="1" fill="#e6e6e6"/><rect x="0" y="11" width="10" height="1" fill="#a9a9a9"/><rect x="1" y="12" width="2" height="1" fill="#b5b5b5"/><rect x="3" y="12" width="5" height="2" fill="#a2a2a2"/><rect x="8" y="12" width="2" height="1" fill="#b5b5b5"/><rect x="10" y="12" width="1" height="1" fill="#a9a9a9"/><rect x="10" y="13" width="2" height="1" fill="#a9a9a9"/><rect x="11" y="14" width="1" height="1" fill="#9a9a9a"/><rect x="2" y="2" width="1" height="4" fill="#8f8bb8"/><rect x="5" y="2" width="1" height="1" fill="#8f8bb8"/><rect x="4" y="3" width="1" height="2" fill="#8f8bb8"/><rect x="6" y="3" width="1" height="2" fill="#8f8bb8"/><rect x="5" y="5" width="1" height="1" fill="#8f8bb8"/><rect x="3" y="7" width="1" height="1" fill="#8f8bb8"/><rect x="2" y="8" width="1" height="2" fill="#8f8bb8"/><rect x="4" y="8" width="1" height="2" fill="#8f8bb8"/><rect x="3" y="10" width="1" height="1" fill="#8f8bb8"/><rect x="6" y="7" width="1" height="4" fill="#8f8bb8"/><rect x="9" y="7" width="1" height="1" fill="#8f8bb8"/><rect x="8" y="8" width="1" height="2" fill="#8f8bb8"/><rect x="10" y="8" width="1" height="2" fill="#8f8bb8"/><rect x="9" y="10" width="1" height="1" fill="#8f8bb8"/></svg></div><div class="lt" style="top:254px;letter-spacing:0.078px">Devices: Allow undock without having to log on</div><div class="lv" style="top:254px">Not Defined</div><div class="lico" style="top:274px"><svg width="14" height="16" viewBox="0 0 14 16" ><rect x="1" y="1" width="11" height="11" fill="#ffffff"/><rect x="11" y="3" width="1" height="10" fill="#ffffff"/><rect x="0" y="0" width="1" height="12" fill="#a9a9a9"/><rect x="0" y="0" width="10" height="1" fill="#a9a9a9"/><rect x="10" y="1" width="1" height="1" fill="#a9a9a9"/><rect x="11" y="2" width="1" height="1" fill="#a9a9a9"/><rect x="12" y="3" width="1" height="12" fill="#a9a9a9"/><rect x="9" y="1" width="1" height="2" fill="#e2e2e2"/><rect x="10" y="2" width="1" height="1" fill="#d0d0d0"/><rect x="9" y="3" width="3" height="1" fill="#e6e6e6"/><rect x="0" y="11" width="10" height="1" fill="#a9a9a9"/><rect x="1" y="12" width="2" height="1" fill="#b5b5b5"/><rect x="3" y="12" width="5" height="2" fill="#a2a2a2"/><rect x="8" y="12" width="2" height="1" fill="#b5b5b5"/><rect x="10" y="12" width="1" height="1" fill="#a9a9a9"/><rect x="10" y="13" width="2" height="1" fill="#a9a9a9"/><rect x="11" y="14" width="1" height="1" fill="#9a9a9a"/><rect x="2" y="2" width="1" height="4" fill="#8f8bb8"/><rect x="5" y="2" width="1" height="1" fill="#8f8bb8"/><rect x="4" y="3" width="1" height="2" fill="#8f8bb8"/><rect x="6" y="3" width="1" height="2" fill="#8f8bb8"/><rect x="5" y="5" width="1" height="1" fill="#8f8bb8"/><rect x="3" y="7" width="1" height="1" fill="#8f8bb8"/><rect x="2" y="8" width="1" height="2" fill="#8f8bb8"/><rect x="4" y="8" width="1" height="2" fill="#8f8bb8"/><rect x="3" y="10" width="1" height="1" fill="#8f8bb8"/><rect x="6" y="7" width="1" height="4" fill="#8f8bb8"/><rect x="9" y="7" width="1" height="1" fill="#8f8bb8"/><rect x="8" y="8" width="1" height="2" fill="#8f8bb8"/><rect x="10" y="8" width="1" height="2" fill="#8f8bb8"/><rect x="9" y="10" width="1" height="1" fill="#8f8bb8"/></svg></div><div class="lt" style="top:273px;letter-spacing:-0.029px">Devices: Allowed to format and eject removable media</div><div class="lv" style="top:273px">Not Defined</div><div class="lico" style="top:293px"><svg width="14" height="16" viewBox="0 0 14 16" ><rect x="1" y="1" width="11" height="11" fill="#ffffff"/><rect x="11" y="3" width="1" height="10" fill="#ffffff"/><rect x="0" y="0" width="1" height="12" fill="#a9a9a9"/><rect x="0" y="0" width="10" height="1" fill="#a9a9a9"/><rect x="10" y="1" width="1" height="1" fill="#a9a9a9"/><rect x="11" y="2" width="1" height="1" fill="#a9a9a9"/><rect x="12" y="3" width="1" height="12" fill="#a9a9a9"/><rect x="9" y="1" width="1" height="2" fill="#e2e2e2"/><rect x="10" y="2" width="1" height="1" fill="#d0d0d0"/><rect x="9" y="3" width="3" height="1" fill="#e6e6e6"/><rect x="0" y="11" width="10" height="1" fill="#a9a9a9"/><rect x="1" y="12" width="2" height="1" fill="#b5b5b5"/><rect x="3" y="12" width="5" height="2" fill="#a2a2a2"/><rect x="8" y="12" width="2" height="1" fill="#b5b5b5"/><rect x="10" y="12" width="1" height="1" fill="#a9a9a9"/><rect x="10" y="13" width="2" height="1" fill="#a9a9a9"/><rect x="11" y="14" width="1" height="1" fill="#9a9a9a"/><rect x="2" y="2" width="1" height="4" fill="#8f8bb8"/><rect x="5" y="2" width="1" height="1" fill="#8f8bb8"/><rect x="4" y="3" width="1" height="2" fill="#8f8bb8"/><rect x="6" y="3" width="1" height="2" fill="#8f8bb8"/><rect x="5" y="5" width="1" height="1" fill="#8f8bb8"/><rect x="3" y="7" width="1" height="1" fill="#8f8bb8"/><rect x="2" y="8" width="1" height="2" fill="#8f8bb8"/><rect x="4" y="8" width="1" height="2" fill="#8f8bb8"/><rect x="3" y="10" width="1" height="1" fill="#8f8bb8"/><rect x="6" y="7" width="1" height="4" fill="#8f8bb8"/><rect x="9" y="7" width="1" height="1" fill="#8f8bb8"/><rect x="8" y="8" width="1" height="2" fill="#8f8bb8"/><rect x="10" y="8" width="1" height="2" fill="#8f8bb8"/><rect x="9" y="10" width="1" height="1" fill="#8f8bb8"/></svg></div><div class="lt" style="top:292px;letter-spacing:-0.123px">Devices: Prevent users from installing printer drivers</div><div class="lv" style="top:292px">Not Defined</div><div class="lico" style="top:312px"><svg width="14" height="16" viewBox="0 0 14 16" ><rect x="1" y="1" width="11" height="11" fill="#ffffff"/><rect x="11" y="3" width="1" height="10" fill="#ffffff"/><rect x="0" y="0" width="1" height="12" fill="#a9a9a9"/><rect x="0" y="0" width="10" height="1" fill="#a9a9a9"/><rect x="10" y="1" width="1" height="1" fill="#a9a9a9"/><rect x="11" y="2" width="1" height="1" fill="#a9a9a9"/><rect x="12" y="3" width="1" height="12" fill="#a9a9a9"/><rect x="9" y="1" width="1" height="2" fill="#e2e2e2"/><rect x="10" y="2" width="1" height="1" fill="#d0d0d0"/><rect x="9" y="3" width="3" height="1" fill="#e6e6e6"/><rect x="0" y="11" width="10" height="1" fill="#a9a9a9"/><rect x="1" y="12" width="2" height="1" fill="#b5b5b5"/><rect x="3" y="12" width="5" height="2" fill="#a2a2a2"/><rect x="8" y="12" width="2" height="1" fill="#b5b5b5"/><rect x="10" y="12" width="1" height="1" fill="#a9a9a9"/><rect x="10" y="13" width="2" height="1" fill="#a9a9a9"/><rect x="11" y="14" width="1" height="1" fill="#9a9a9a"/><rect x="2" y="2" width="1" height="4" fill="#8f8bb8"/><rect x="5" y="2" width="1" height="1" fill="#8f8bb8"/><rect x="4" y="3" width="1" height="2" fill="#8f8bb8"/><rect x="6" y="3" width="1" height="2" fill="#8f8bb8"/><rect x="5" y="5" width="1" height="1" fill="#8f8bb8"/><rect x="3" y="7" width="1" height="1" fill="#8f8bb8"/><rect x="2" y="8" width="1" height="2" fill="#8f8bb8"/><rect x="4" y="8" width="1" height="2" fill="#8f8bb8"/><rect x="3" y="10" width="1" height="1" fill="#8f8bb8"/><rect x="6" y="7" width="1" height="4" fill="#8f8bb8"/><rect x="9" y="7" width="1" height="1" fill="#8f8bb8"/><rect x="8" y="8" width="1" height="2" fill="#8f8bb8"/><rect x="10" y="8" width="1" height="2" fill="#8f8bb8"/><rect x="9" y="10" width="1" height="1" fill="#8f8bb8"/></svg></div><div class="lt" style="top:311px;letter-spacing:-0.1703px">Devices: Restrict CD-ROM access to locally logged-on user ...</div><div class="lv" style="top:311px">Not Defined</div><div class="lico" style="top:331px"><svg width="14" height="16" viewBox="0 0 14 16" ><rect x="1" y="1" width="11" height="11" fill="#ffffff"/><rect x="11" y="3" width="1" height="10" fill="#ffffff"/><rect x="0" y="0" width="1" height="12" fill="#a9a9a9"/><rect x="0" y="0" width="10" height="1" fill="#a9a9a9"/><rect x="10" y="1" width="1" height="1" fill="#a9a9a9"/><rect x="11" y="2" width="1" height="1" fill="#a9a9a9"/><rect x="12" y="3" width="1" height="12" fill="#a9a9a9"/><rect x="9" y="1" width="1" height="2" fill="#e2e2e2"/><rect x="10" y="2" width="1" height="1" fill="#d0d0d0"/><rect x="9" y="3" width="3" height="1" fill="#e6e6e6"/><rect x="0" y="11" width="10" height="1" fill="#a9a9a9"/><rect x="1" y="12" width="2" height="1" fill="#b5b5b5"/><rect x="3" y="12" width="5" height="2" fill="#a2a2a2"/><rect x="8" y="12" width="2" height="1" fill="#b5b5b5"/><rect x="10" y="12" width="1" height="1" fill="#a9a9a9"/><rect x="10" y="13" width="2" height="1" fill="#a9a9a9"/><rect x="11" y="14" width="1" height="1" fill="#9a9a9a"/><rect x="2" y="2" width="1" height="4" fill="#8f8bb8"/><rect x="5" y="2" width="1" height="1" fill="#8f8bb8"/><rect x="4" y="3" width="1" height="2" fill="#8f8bb8"/><rect x="6" y="3" width="1" height="2" fill="#8f8bb8"/><rect x="5" y="5" width="1" height="1" fill="#8f8bb8"/><rect x="3" y="7" width="1" height="1" fill="#8f8bb8"/><rect x="2" y="8" width="1" height="2" fill="#8f8bb8"/><rect x="4" y="8" width="1" height="2" fill="#8f8bb8"/><rect x="3" y="10" width="1" height="1" fill="#8f8bb8"/><rect x="6" y="7" width="1" height="4" fill="#8f8bb8"/><rect x="9" y="7" width="1" height="1" fill="#8f8bb8"/><rect x="8" y="8" width="1" height="2" fill="#8f8bb8"/><rect x="10" y="8" width="1" height="2" fill="#8f8bb8"/><rect x="9" y="10" width="1" height="1" fill="#8f8bb8"/></svg></div><div class="lt" style="top:330px;letter-spacing:-0.084px">Devices: Restrict floppy access to locally logged-on user only</div><div class="lv" style="top:330px">Not Defined</div><div class="lico" style="top:350px"><svg width="14" height="16" viewBox="0 0 14 16" ><rect x="1" y="1" width="11" height="11" fill="#ffffff"/><rect x="11" y="3" width="1" height="10" fill="#ffffff"/><rect x="0" y="0" width="1" height="12" fill="#a9a9a9"/><rect x="0" y="0" width="10" height="1" fill="#a9a9a9"/><rect x="10" y="1" width="1" height="1" fill="#a9a9a9"/><rect x="11" y="2" width="1" height="1" fill="#a9a9a9"/><rect x="12" y="3" width="1" height="12" fill="#a9a9a9"/><rect x="9" y="1" width="1" height="2" fill="#e2e2e2"/><rect x="10" y="2" width="1" height="1" fill="#d0d0d0"/><rect x="9" y="3" width="3" height="1" fill="#e6e6e6"/><rect x="0" y="11" width="10" height="1" fill="#a9a9a9"/><rect x="1" y="12" width="2" height="1" fill="#b5b5b5"/><rect x="3" y="12" width="5" height="2" fill="#a2a2a2"/><rect x="8" y="12" width="2" height="1" fill="#b5b5b5"/><rect x="10" y="12" width="1" height="1" fill="#a9a9a9"/><rect x="10" y="13" width="2" height="1" fill="#a9a9a9"/><rect x="11" y="14" width="1" height="1" fill="#9a9a9a"/><rect x="2" y="2" width="1" height="4" fill="#8f8bb8"/><rect x="5" y="2" width="1" height="1" fill="#8f8bb8"/><rect x="4" y="3" width="1" height="2" fill="#8f8bb8"/><rect x="6" y="3" width="1" height="2" fill="#8f8bb8"/><rect x="5" y="5" width="1" height="1" fill="#8f8bb8"/><rect x="3" y="7" width="1" height="1" fill="#8f8bb8"/><rect x="2" y="8" width="1" height="2" fill="#8f8bb8"/><rect x="4" y="8" width="1" height="2" fill="#8f8bb8"/><rect x="3" y="10" width="1" height="1" fill="#8f8bb8"/><rect x="6" y="7" width="1" height="4" fill="#8f8bb8"/><rect x="9" y="7" width="1" height="1" fill="#8f8bb8"/><rect x="8" y="8" width="1" height="2" fill="#8f8bb8"/><rect x="10" y="8" width="1" height="2" fill="#8f8bb8"/><rect x="9" y="10" width="1" height="1" fill="#8f8bb8"/></svg></div><div class="lt" style="top:349px;letter-spacing:0.08px">Domain controller: Allow computer account re-use during d...</div><div class="lv" style="top:349px">Not Defined</div><div class="lico" style="top:369px"><svg width="14" height="16" viewBox="0 0 14 16" ><rect x="1" y="1" width="11" height="11" fill="#ffffff"/><rect x="11" y="3" width="1" height="10" fill="#ffffff"/><rect x="0" y="0" width="1" height="12" fill="#a9a9a9"/><rect x="0" y="0" width="10" height="1" fill="#a9a9a9"/><rect x="10" y="1" width="1" height="1" fill="#a9a9a9"/><rect x="11" y="2" width="1" height="1" fill="#a9a9a9"/><rect x="12" y="3" width="1" height="12" fill="#a9a9a9"/><rect x="9" y="1" width="1" height="2" fill="#e2e2e2"/><rect x="10" y="2" width="1" height="1" fill="#d0d0d0"/><rect x="9" y="3" width="3" height="1" fill="#e6e6e6"/><rect x="0" y="11" width="10" height="1" fill="#a9a9a9"/><rect x="1" y="12" width="2" height="1" fill="#b5b5b5"/><rect x="3" y="12" width="5" height="2" fill="#a2a2a2"/><rect x="8" y="12" width="2" height="1" fill="#b5b5b5"/><rect x="10" y="12" width="1" height="1" fill="#a9a9a9"/><rect x="10" y="13" width="2" height="1" fill="#a9a9a9"/><rect x="11" y="14" width="1" height="1" fill="#9a9a9a"/><rect x="2" y="2" width="1" height="4" fill="#8f8bb8"/><rect x="5" y="2" width="1" height="1" fill="#8f8bb8"/><rect x="4" y="3" width="1" height="2" fill="#8f8bb8"/><rect x="6" y="3" width="1" height="2" fill="#8f8bb8"/><rect x="5" y="5" width="1" height="1" fill="#8f8bb8"/><rect x="3" y="7" width="1" height="1" fill="#8f8bb8"/><rect x="2" y="8" width="1" height="2" fill="#8f8bb8"/><rect x="4" y="8" width="1" height="2" fill="#8f8bb8"/><rect x="3" y="10" width="1" height="1" fill="#8f8bb8"/><rect x="6" y="7" width="1" height="4" fill="#8f8bb8"/><rect x="9" y="7" width="1" height="1" fill="#8f8bb8"/><rect x="8" y="8" width="1" height="2" fill="#8f8bb8"/><rect x="10" y="8" width="1" height="2" fill="#8f8bb8"/><rect x="9" y="10" width="1" height="1" fill="#8f8bb8"/></svg></div><div class="lt" style="top:368px;letter-spacing:-0.078px">Domain controller: Allow server operators to schedule tasks</div><div class="lv" style="top:368px">Not Defined</div><div class="lico" style="top:388px"><svg width="14" height="16" viewBox="0 0 14 16" ><rect x="1" y="1" width="11" height="11" fill="#ffffff"/><rect x="11" y="3" width="1" height="10" fill="#ffffff"/><rect x="0" y="0" width="1" height="12" fill="#a9a9a9"/><rect x="0" y="0" width="10" height="1" fill="#a9a9a9"/><rect x="10" y="1" width="1" height="1" fill="#a9a9a9"/><rect x="11" y="2" width="1" height="1" fill="#a9a9a9"/><rect x="12" y="3" width="1" height="12" fill="#a9a9a9"/><rect x="9" y="1" width="1" height="2" fill="#e2e2e2"/><rect x="10" y="2" width="1" height="1" fill="#d0d0d0"/><rect x="9" y="3" width="3" height="1" fill="#e6e6e6"/><rect x="0" y="11" width="10" height="1" fill="#a9a9a9"/><rect x="1" y="12" width="2" height="1" fill="#b5b5b5"/><rect x="3" y="12" width="5" height="2" fill="#a2a2a2"/><rect x="8" y="12" width="2" height="1" fill="#b5b5b5"/><rect x="10" y="12" width="1" height="1" fill="#a9a9a9"/><rect x="10" y="13" width="2" height="1" fill="#a9a9a9"/><rect x="11" y="14" width="1" height="1" fill="#9a9a9a"/><rect x="2" y="2" width="1" height="4" fill="#8f8bb8"/><rect x="5" y="2" width="1" height="1" fill="#8f8bb8"/><rect x="4" y="3" width="1" height="2" fill="#8f8bb8"/><rect x="6" y="3" width="1" height="2" fill="#8f8bb8"/><rect x="5" y="5" width="1" height="1" fill="#8f8bb8"/><rect x="3" y="7" width="1" height="1" fill="#8f8bb8"/><rect x="2" y="8" width="1" height="2" fill="#8f8bb8"/><rect x="4" y="8" width="1" height="2" fill="#8f8bb8"/><rect x="3" y="10" width="1" height="1" fill="#8f8bb8"/><rect x="6" y="7" width="1" height="4" fill="#8f8bb8"/><rect x="9" y="7" width="1" height="1" fill="#8f8bb8"/><rect x="8" y="8" width="1" height="2" fill="#8f8bb8"/><rect x="10" y="8" width="1" height="2" fill="#8f8bb8"/><rect x="9" y="10" width="1" height="1" fill="#8f8bb8"/></svg></div><div class="lt" style="top:387px;letter-spacing:0.019px">Domain controller: Allow vulnerable Netlogon secure chann...</div><div class="lv" style="top:387px">Not Defined</div><div class="lico" style="top:407px"><svg width="14" height="16" viewBox="0 0 14 16" ><rect x="1" y="1" width="11" height="11" fill="#ffffff"/><rect x="11" y="3" width="1" height="10" fill="#ffffff"/><rect x="0" y="0" width="1" height="12" fill="#a9a9a9"/><rect x="0" y="0" width="10" height="1" fill="#a9a9a9"/><rect x="10" y="1" width="1" height="1" fill="#a9a9a9"/><rect x="11" y="2" width="1" height="1" fill="#a9a9a9"/><rect x="12" y="3" width="1" height="12" fill="#a9a9a9"/><rect x="9" y="1" width="1" height="2" fill="#e2e2e2"/><rect x="10" y="2" width="1" height="1" fill="#d0d0d0"/><rect x="9" y="3" width="3" height="1" fill="#e6e6e6"/><rect x="0" y="11" width="10" height="1" fill="#a9a9a9"/><rect x="1" y="12" width="2" height="1" fill="#b5b5b5"/><rect x="3" y="12" width="5" height="2" fill="#a2a2a2"/><rect x="8" y="12" width="2" height="1" fill="#b5b5b5"/><rect x="10" y="12" width="1" height="1" fill="#a9a9a9"/><rect x="10" y="13" width="2" height="1" fill="#a9a9a9"/><rect x="11" y="14" width="1" height="1" fill="#9a9a9a"/><rect x="2" y="2" width="1" height="4" fill="#8f8bb8"/><rect x="5" y="2" width="1" height="1" fill="#8f8bb8"/><rect x="4" y="3" width="1" height="2" fill="#8f8bb8"/><rect x="6" y="3" width="1" height="2" fill="#8f8bb8"/><rect x="5" y="5" width="1" height="1" fill="#8f8bb8"/><rect x="3" y="7" width="1" height="1" fill="#8f8bb8"/><rect x="2" y="8" width="1" height="2" fill="#8f8bb8"/><rect x="4" y="8" width="1" height="2" fill="#8f8bb8"/><rect x="3" y="10" width="1" height="1" fill="#8f8bb8"/><rect x="6" y="7" width="1" height="4" fill="#8f8bb8"/><rect x="9" y="7" width="1" height="1" fill="#8f8bb8"/><rect x="8" y="8" width="1" height="2" fill="#8f8bb8"/><rect x="10" y="8" width="1" height="2" fill="#8f8bb8"/><rect x="9" y="10" width="1" height="1" fill="#8f8bb8"/></svg></div><div class="lt" style="top:406px;letter-spacing:-0.038px">Domain controller: LDAP server channel binding token requi...</div><div class="lv" style="top:406px">Not Defined</div><div class="lico" style="top:426px"><svg width="14" height="16" viewBox="0 0 14 16" ><rect x="1" y="1" width="11" height="11" fill="#ffffff"/><rect x="11" y="3" width="1" height="10" fill="#ffffff"/><rect x="0" y="0" width="1" height="12" fill="#a9a9a9"/><rect x="0" y="0" width="10" height="1" fill="#a9a9a9"/><rect x="10" y="1" width="1" height="1" fill="#a9a9a9"/><rect x="11" y="2" width="1" height="1" fill="#a9a9a9"/><rect x="12" y="3" width="1" height="12" fill="#a9a9a9"/><rect x="9" y="1" width="1" height="2" fill="#e2e2e2"/><rect x="10" y="2" width="1" height="1" fill="#d0d0d0"/><rect x="9" y="3" width="3" height="1" fill="#e6e6e6"/><rect x="0" y="11" width="10" height="1" fill="#a9a9a9"/><rect x="1" y="12" width="2" height="1" fill="#b5b5b5"/><rect x="3" y="12" width="5" height="2" fill="#a2a2a2"/><rect x="8" y="12" width="2" height="1" fill="#b5b5b5"/><rect x="10" y="12" width="1" height="1" fill="#a9a9a9"/><rect x="10" y="13" width="2" height="1" fill="#a9a9a9"/><rect x="11" y="14" width="1" height="1" fill="#9a9a9a"/><rect x="2" y="2" width="1" height="4" fill="#8f8bb8"/><rect x="5" y="2" width="1" height="1" fill="#8f8bb8"/><rect x="4" y="3" width="1" height="2" fill="#8f8bb8"/><rect x="6" y="3" width="1" height="2" fill="#8f8bb8"/><rect x="5" y="5" width="1" height="1" fill="#8f8bb8"/><rect x="3" y="7" width="1" height="1" fill="#8f8bb8"/><rect x="2" y="8" width="1" height="2" fill="#8f8bb8"/><rect x="4" y="8" width="1" height="2" fill="#8f8bb8"/><rect x="3" y="10" width="1" height="1" fill="#8f8bb8"/><rect x="6" y="7" width="1" height="4" fill="#8f8bb8"/><rect x="9" y="7" width="1" height="1" fill="#8f8bb8"/><rect x="8" y="8" width="1" height="2" fill="#8f8bb8"/><rect x="10" y="8" width="1" height="2" fill="#8f8bb8"/><rect x="9" y="10" width="1" height="1" fill="#8f8bb8"/></svg></div><div class="lt" style="top:425px;letter-spacing:-0.076px">Domain controller: LDAP server signing requirements</div><div class="lv" style="top:425px">Not Defined</div><div class="lico" style="top:445px"><svg width="14" height="16" viewBox="0 0 14 16" ><rect x="1" y="1" width="11" height="11" fill="#ffffff"/><rect x="11" y="3" width="1" height="10" fill="#ffffff"/><rect x="0" y="0" width="1" height="12" fill="#a9a9a9"/><rect x="0" y="0" width="10" height="1" fill="#a9a9a9"/><rect x="10" y="1" width="1" height="1" fill="#a9a9a9"/><rect x="11" y="2" width="1" height="1" fill="#a9a9a9"/><rect x="12" y="3" width="1" height="12" fill="#a9a9a9"/><rect x="9" y="1" width="1" height="2" fill="#e2e2e2"/><rect x="10" y="2" width="1" height="1" fill="#d0d0d0"/><rect x="9" y="3" width="3" height="1" fill="#e6e6e6"/><rect x="0" y="11" width="10" height="1" fill="#a9a9a9"/><rect x="1" y="12" width="2" height="1" fill="#b5b5b5"/><rect x="3" y="12" width="5" height="2" fill="#a2a2a2"/><rect x="8" y="12" width="2" height="1" fill="#b5b5b5"/><rect x="10" y="12" width="1" height="1" fill="#a9a9a9"/><rect x="10" y="13" width="2" height="1" fill="#a9a9a9"/><rect x="11" y="14" width="1" height="1" fill="#9a9a9a"/><rect x="2" y="2" width="1" height="4" fill="#8f8bb8"/><rect x="5" y="2" width="1" height="1" fill="#8f8bb8"/><rect x="4" y="3" width="1" height="2" fill="#8f8bb8"/><rect x="6" y="3" width="1" height="2" fill="#8f8bb8"/><rect x="5" y="5" width="1" height="1" fill="#8f8bb8"/><rect x="3" y="7" width="1" height="1" fill="#8f8bb8"/><rect x="2" y="8" width="1" height="2" fill="#8f8bb8"/><rect x="4" y="8" width="1" height="2" fill="#8f8bb8"/><rect x="3" y="10" width="1" height="1" fill="#8f8bb8"/><rect x="6" y="7" width="1" height="4" fill="#8f8bb8"/><rect x="9" y="7" width="1" height="1" fill="#8f8bb8"/><rect x="8" y="8" width="1" height="2" fill="#8f8bb8"/><rect x="10" y="8" width="1" height="2" fill="#8f8bb8"/><rect x="9" y="10" width="1" height="1" fill="#8f8bb8"/></svg></div><div class="lt" style="top:444px;letter-spacing:-0.077px">Domain controller: LDAP server signing requirements Enforc...</div><div class="lv" style="top:444px">Not Defined</div><div class="lico" style="top:464px"><svg width="14" height="16" viewBox="0 0 14 16" ><rect x="1" y="1" width="11" height="11" fill="#ffffff"/><rect x="11" y="3" width="1" height="10" fill="#ffffff"/><rect x="0" y="0" width="1" height="12" fill="#a9a9a9"/><rect x="0" y="0" width="10" height="1" fill="#a9a9a9"/><rect x="10" y="1" width="1" height="1" fill="#a9a9a9"/><rect x="11" y="2" width="1" height="1" fill="#a9a9a9"/><rect x="12" y="3" width="1" height="12" fill="#a9a9a9"/><rect x="9" y="1" width="1" height="2" fill="#e2e2e2"/><rect x="10" y="2" width="1" height="1" fill="#d0d0d0"/><rect x="9" y="3" width="3" height="1" fill="#e6e6e6"/><rect x="0" y="11" width="10" height="1" fill="#a9a9a9"/><rect x="1" y="12" width="2" height="1" fill="#b5b5b5"/><rect x="3" y="12" width="5" height="2" fill="#a2a2a2"/><rect x="8" y="12" width="2" height="1" fill="#b5b5b5"/><rect x="10" y="12" width="1" height="1" fill="#a9a9a9"/><rect x="10" y="13" width="2" height="1" fill="#a9a9a9"/><rect x="11" y="14" width="1" height="1" fill="#9a9a9a"/><rect x="2" y="2" width="1" height="4" fill="#8f8bb8"/><rect x="5" y="2" width="1" height="1" fill="#8f8bb8"/><rect x="4" y="3" width="1" height="2" fill="#8f8bb8"/><rect x="6" y="3" width="1" height="2" fill="#8f8bb8"/><rect x="5" y="5" width="1" height="1" fill="#8f8bb8"/><rect x="3" y="7" width="1" height="1" fill="#8f8bb8"/><rect x="2" y="8" width="1" height="2" fill="#8f8bb8"/><rect x="4" y="8" width="1" height="2" fill="#8f8bb8"/><rect x="3" y="10" width="1" height="1" fill="#8f8bb8"/><rect x="6" y="7" width="1" height="4" fill="#8f8bb8"/><rect x="9" y="7" width="1" height="1" fill="#8f8bb8"/><rect x="8" y="8" width="1" height="2" fill="#8f8bb8"/><rect x="10" y="8" width="1" height="2" fill="#8f8bb8"/><rect x="9" y="10" width="1" height="1" fill="#8f8bb8"/></svg></div><div class="lt" style="top:463px;letter-spacing:-0.053px">Domain controller: Refuse machine account password chan...</div><div class="lv" style="top:463px">Not Defined</div><div class="lico" style="top:483px"><svg width="14" height="16" viewBox="0 0 14 16" ><rect x="1" y="1" width="11" height="11" fill="#ffffff"/><rect x="11" y="3" width="1" height="10" fill="#ffffff"/><rect x="0" y="0" width="1" height="12" fill="#a9a9a9"/><rect x="0" y="0" width="10" height="1" fill="#a9a9a9"/><rect x="10" y="1" width="1" height="1" fill="#a9a9a9"/><rect x="11" y="2" width="1" height="1" fill="#a9a9a9"/><rect x="12" y="3" width="1" height="12" fill="#a9a9a9"/><rect x="9" y="1" width="1" height="2" fill="#e2e2e2"/><rect x="10" y="2" width="1" height="1" fill="#d0d0d0"/><rect x="9" y="3" width="3" height="1" fill="#e6e6e6"/><rect x="0" y="11" width="10" height="1" fill="#a9a9a9"/><rect x="1" y="12" width="2" height="1" fill="#b5b5b5"/><rect x="3" y="12" width="5" height="2" fill="#a2a2a2"/><rect x="8" y="12" width="2" height="1" fill="#b5b5b5"/><rect x="10" y="12" width="1" height="1" fill="#a9a9a9"/><rect x="10" y="13" width="2" height="1" fill="#a9a9a9"/><rect x="11" y="14" width="1" height="1" fill="#9a9a9a"/><rect x="2" y="2" width="1" height="4" fill="#8f8bb8"/><rect x="5" y="2" width="1" height="1" fill="#8f8bb8"/><rect x="4" y="3" width="1" height="2" fill="#8f8bb8"/><rect x="6" y="3" width="1" height="2" fill="#8f8bb8"/><rect x="5" y="5" width="1" height="1" fill="#8f8bb8"/><rect x="3" y="7" width="1" height="1" fill="#8f8bb8"/><rect x="2" y="8" width="1" height="2" fill="#8f8bb8"/><rect x="4" y="8" width="1" height="2" fill="#8f8bb8"/><rect x="3" y="10" width="1" height="1" fill="#8f8bb8"/><rect x="6" y="7" width="1" height="4" fill="#8f8bb8"/><rect x="9" y="7" width="1" height="1" fill="#8f8bb8"/><rect x="8" y="8" width="1" height="2" fill="#8f8bb8"/><rect x="10" y="8" width="1" height="2" fill="#8f8bb8"/><rect x="9" y="10" width="1" height="1" fill="#8f8bb8"/></svg></div><div class="lt" style="top:482px;letter-spacing:-0.027px">Domain controller: Refuse setting default machine account ...</div><div class="lv" style="top:482px">Not Defined</div><div class="lico" style="top:502px"><svg width="14" height="16" viewBox="0 0 14 16" ><rect x="1" y="1" width="11" height="11" fill="#ffffff"/><rect x="11" y="3" width="1" height="10" fill="#ffffff"/><rect x="0" y="0" width="1" height="12" fill="#a9a9a9"/><rect x="0" y="0" width="10" height="1" fill="#a9a9a9"/><rect x="10" y="1" width="1" height="1" fill="#a9a9a9"/><rect x="11" y="2" width="1" height="1" fill="#a9a9a9"/><rect x="12" y="3" width="1" height="12" fill="#a9a9a9"/><rect x="9" y="1" width="1" height="2" fill="#e2e2e2"/><rect x="10" y="2" width="1" height="1" fill="#d0d0d0"/><rect x="9" y="3" width="3" height="1" fill="#e6e6e6"/><rect x="0" y="11" width="10" height="1" fill="#a9a9a9"/><rect x="1" y="12" width="2" height="1" fill="#b5b5b5"/><rect x="3" y="12" width="5" height="2" fill="#a2a2a2"/><rect x="8" y="12" width="2" height="1" fill="#b5b5b5"/><rect x="10" y="12" width="1" height="1" fill="#a9a9a9"/><rect x="10" y="13" width="2" height="1" fill="#a9a9a9"/><rect x="11" y="14" width="1" height="1" fill="#9a9a9a"/><rect x="2" y="2" width="1" height="4" fill="#8f8bb8"/><rect x="5" y="2" width="1" height="1" fill="#8f8bb8"/><rect x="4" y="3" width="1" height="2" fill="#8f8bb8"/><rect x="6" y="3" width="1" height="2" fill="#8f8bb8"/><rect x="5" y="5" width="1" height="1" fill="#8f8bb8"/><rect x="3" y="7" width="1" height="1" fill="#8f8bb8"/><rect x="2" y="8" width="1" height="2" fill="#8f8bb8"/><rect x="4" y="8" width="1" height="2" fill="#8f8bb8"/><rect x="3" y="10" width="1" height="1" fill="#8f8bb8"/><rect x="6" y="7" width="1" height="4" fill="#8f8bb8"/><rect x="9" y="7" width="1" height="1" fill="#8f8bb8"/><rect x="8" y="8" width="1" height="2" fill="#8f8bb8"/><rect x="10" y="8" width="1" height="2" fill="#8f8bb8"/><rect x="9" y="10" width="1" height="1" fill="#8f8bb8"/></svg></div><div class="lt" style="top:501px;letter-spacing:-0.042px">Domain member: Digitally encrypt or sign secure channel d...</div><div class="lv" style="top:501px">Not Defined</div><div class="lico" style="top:521px"><svg width="14" height="16" viewBox="0 0 14 16" ><rect x="1" y="1" width="11" height="11" fill="#ffffff"/><rect x="11" y="3" width="1" height="10" fill="#ffffff"/><rect x="0" y="0" width="1" height="12" fill="#a9a9a9"/><rect x="0" y="0" width="10" height="1" fill="#a9a9a9"/><rect x="10" y="1" width="1" height="1" fill="#a9a9a9"/><rect x="11" y="2" width="1" height="1" fill="#a9a9a9"/><rect x="12" y="3" width="1" height="12" fill="#a9a9a9"/><rect x="9" y="1" width="1" height="2" fill="#e2e2e2"/><rect x="10" y="2" width="1" height="1" fill="#d0d0d0"/><rect x="9" y="3" width="3" height="1" fill="#e6e6e6"/><rect x="0" y="11" width="10" height="1" fill="#a9a9a9"/><rect x="1" y="12" width="2" height="1" fill="#b5b5b5"/><rect x="3" y="12" width="5" height="2" fill="#a2a2a2"/><rect x="8" y="12" width="2" height="1" fill="#b5b5b5"/><rect x="10" y="12" width="1" height="1" fill="#a9a9a9"/><rect x="10" y="13" width="2" height="1" fill="#a9a9a9"/><rect x="11" y="14" width="1" height="1" fill="#9a9a9a"/><rect x="2" y="2" width="1" height="4" fill="#8f8bb8"/><rect x="5" y="2" width="1" height="1" fill="#8f8bb8"/><rect x="4" y="3" width="1" height="2" fill="#8f8bb8"/><rect x="6" y="3" width="1" height="2" fill="#8f8bb8"/><rect x="5" y="5" width="1" height="1" fill="#8f8bb8"/><rect x="3" y="7" width="1" height="1" fill="#8f8bb8"/><rect x="2" y="8" width="1" height="2" fill="#8f8bb8"/><rect x="4" y="8" width="1" height="2" fill="#8f8bb8"/><rect x="3" y="10" width="1" height="1" fill="#8f8bb8"/><rect x="6" y="7" width="1" height="4" fill="#8f8bb8"/><rect x="9" y="7" width="1" height="1" fill="#8f8bb8"/><rect x="8" y="8" width="1" height="2" fill="#8f8bb8"/><rect x="10" y="8" width="1" height="2" fill="#8f8bb8"/><rect x="9" y="10" width="1" height="1" fill="#8f8bb8"/></svg></div><div class="lt" style="top:520px;letter-spacing:-0.043px">Domain member: Digitally encrypt secure channel data (wh...</div><div class="lv" style="top:520px">Not Defined</div><div class="lico" style="top:540px"><svg width="14" height="16" viewBox="0 0 14 16" ><rect x="1" y="1" width="11" height="11" fill="#ffffff"/><rect x="11" y="3" width="1" height="10" fill="#ffffff"/><rect x="0" y="0" width="1" height="12" fill="#a9a9a9"/><rect x="0" y="0" width="10" height="1" fill="#a9a9a9"/><rect x="10" y="1" width="1" height="1" fill="#a9a9a9"/><rect x="11" y="2" width="1" height="1" fill="#a9a9a9"/><rect x="12" y="3" width="1" height="12" fill="#a9a9a9"/><rect x="9" y="1" width="1" height="2" fill="#e2e2e2"/><rect x="10" y="2" width="1" height="1" fill="#d0d0d0"/><rect x="9" y="3" width="3" height="1" fill="#e6e6e6"/><rect x="0" y="11" width="10" height="1" fill="#a9a9a9"/><rect x="1" y="12" width="2" height="1" fill="#b5b5b5"/><rect x="3" y="12" width="5" height="2" fill="#a2a2a2"/><rect x="8" y="12" width="2" height="1" fill="#b5b5b5"/><rect x="10" y="12" width="1" height="1" fill="#a9a9a9"/><rect x="10" y="13" width="2" height="1" fill="#a9a9a9"/><rect x="11" y="14" width="1" height="1" fill="#9a9a9a"/><rect x="2" y="2" width="1" height="4" fill="#8f8bb8"/><rect x="5" y="2" width="1" height="1" fill="#8f8bb8"/><rect x="4" y="3" width="1" height="2" fill="#8f8bb8"/><rect x="6" y="3" width="1" height="2" fill="#8f8bb8"/><rect x="5" y="5" width="1" height="1" fill="#8f8bb8"/><rect x="3" y="7" width="1" height="1" fill="#8f8bb8"/><rect x="2" y="8" width="1" height="2" fill="#8f8bb8"/><rect x="4" y="8" width="1" height="2" fill="#8f8bb8"/><rect x="3" y="10" width="1" height="1" fill="#8f8bb8"/><rect x="6" y="7" width="1" height="4" fill="#8f8bb8"/><rect x="9" y="7" width="1" height="1" fill="#8f8bb8"/><rect x="8" y="8" width="1" height="2" fill="#8f8bb8"/><rect x="10" y="8" width="1" height="2" fill="#8f8bb8"/><rect x="9" y="10" width="1" height="1" fill="#8f8bb8"/></svg></div><div class="lt" style="top:539px;letter-spacing:-0.053px">Domain member: Digitally sign secure channel data (when ...</div><div class="lv" style="top:539px">Not Defined</div><div class="lico" style="top:559px"><svg width="14" height="16" viewBox="0 0 14 16" ><rect x="1" y="1" width="11" height="11" fill="#ffffff"/><rect x="11" y="3" width="1" height="10" fill="#ffffff"/><rect x="0" y="0" width="1" height="12" fill="#a9a9a9"/><rect x="0" y="0" width="10" height="1" fill="#a9a9a9"/><rect x="10" y="1" width="1" height="1" fill="#a9a9a9"/><rect x="11" y="2" width="1" height="1" fill="#a9a9a9"/><rect x="12" y="3" width="1" height="12" fill="#a9a9a9"/><rect x="9" y="1" width="1" height="2" fill="#e2e2e2"/><rect x="10" y="2" width="1" height="1" fill="#d0d0d0"/><rect x="9" y="3" width="3" height="1" fill="#e6e6e6"/><rect x="0" y="11" width="10" height="1" fill="#a9a9a9"/><rect x="1" y="12" width="2" height="1" fill="#b5b5b5"/><rect x="3" y="12" width="5" height="2" fill="#a2a2a2"/><rect x="8" y="12" width="2" height="1" fill="#b5b5b5"/><rect x="10" y="12" width="1" height="1" fill="#a9a9a9"/><rect x="10" y="13" width="2" height="1" fill="#a9a9a9"/><rect x="11" y="14" width="1" height="1" fill="#9a9a9a"/><rect x="2" y="2" width="1" height="4" fill="#8f8bb8"/><rect x="5" y="2" width="1" height="1" fill="#8f8bb8"/><rect x="4" y="3" width="1" height="2" fill="#8f8bb8"/><rect x="6" y="3" width="1" height="2" fill="#8f8bb8"/><rect x="5" y="5" width="1" height="1" fill="#8f8bb8"/><rect x="3" y="7" width="1" height="1" fill="#8f8bb8"/><rect x="2" y="8" width="1" height="2" fill="#8f8bb8"/><rect x="4" y="8" width="1" height="2" fill="#8f8bb8"/><rect x="3" y="10" width="1" height="1" fill="#8f8bb8"/><rect x="6" y="7" width="1" height="4" fill="#8f8bb8"/><rect x="9" y="7" width="1" height="1" fill="#8f8bb8"/><rect x="8" y="8" width="1" height="2" fill="#8f8bb8"/><rect x="10" y="8" width="1" height="2" fill="#8f8bb8"/><rect x="9" y="10" width="1" height="1" fill="#8f8bb8"/></svg></div><div class="lt" style="top:558px;letter-spacing:-0.057px">Domain member: Disable machine account password chan...</div><div class="lv" style="top:558px">Not Defined</div><div class="lico" style="top:578px"><svg width="14" height="16" viewBox="0 0 14 16" ><rect x="1" y="1" width="11" height="11" fill="#ffffff"/><rect x="11" y="3" width="1" height="10" fill="#ffffff"/><rect x="0" y="0" width="1" height="12" fill="#a9a9a9"/><rect x="0" y="0" width="10" height="1" fill="#a9a9a9"/><rect x="10" y="1" width="1" height="1" fill="#a9a9a9"/><rect x="11" y="2" width="1" height="1" fill="#a9a9a9"/><rect x="12" y="3" width="1" height="12" fill="#a9a9a9"/><rect x="9" y="1" width="1" height="2" fill="#e2e2e2"/><rect x="10" y="2" width="1" height="1" fill="#d0d0d0"/><rect x="9" y="3" width="3" height="1" fill="#e6e6e6"/><rect x="0" y="11" width="10" height="1" fill="#a9a9a9"/><rect x="1" y="12" width="2" height="1" fill="#b5b5b5"/><rect x="3" y="12" width="5" height="2" fill="#a2a2a2"/><rect x="8" y="12" width="2" height="1" fill="#b5b5b5"/><rect x="10" y="12" width="1" height="1" fill="#a9a9a9"/><rect x="10" y="13" width="2" height="1" fill="#a9a9a9"/><rect x="11" y="14" width="1" height="1" fill="#9a9a9a"/><rect x="2" y="2" width="1" height="4" fill="#8f8bb8"/><rect x="5" y="2" width="1" height="1" fill="#8f8bb8"/><rect x="4" y="3" width="1" height="2" fill="#8f8bb8"/><rect x="6" y="3" width="1" height="2" fill="#8f8bb8"/><rect x="5" y="5" width="1" height="1" fill="#8f8bb8"/><rect x="3" y="7" width="1" height="1" fill="#8f8bb8"/><rect x="2" y="8" width="1" height="2" fill="#8f8bb8"/><rect x="4" y="8" width="1" height="2" fill="#8f8bb8"/><rect x="3" y="10" width="1" height="1" fill="#8f8bb8"/><rect x="6" y="7" width="1" height="4" fill="#8f8bb8"/><rect x="9" y="7" width="1" height="1" fill="#8f8bb8"/><rect x="8" y="8" width="1" height="2" fill="#8f8bb8"/><rect x="10" y="8" width="1" height="2" fill="#8f8bb8"/><rect x="9" y="10" width="1" height="1" fill="#8f8bb8"/></svg></div><div class="lt" style="top:577px;letter-spacing:-0.002px">Domain member: Maximum machine account password age</div><div class="lv" style="top:577px">Not Defined</div><div class="lico" style="top:597px"><svg width="14" height="16" viewBox="0 0 14 16" ><rect x="1" y="1" width="11" height="11" fill="#ffffff"/><rect x="11" y="3" width="1" height="10" fill="#ffffff"/><rect x="0" y="0" width="1" height="12" fill="#a9a9a9"/><rect x="0" y="0" width="10" height="1" fill="#a9a9a9"/><rect x="10" y="1" width="1" height="1" fill="#a9a9a9"/><rect x="11" y="2" width="1" height="1" fill="#a9a9a9"/><rect x="12" y="3" width="1" height="12" fill="#a9a9a9"/><rect x="9" y="1" width="1" height="2" fill="#e2e2e2"/><rect x="10" y="2" width="1" height="1" fill="#d0d0d0"/><rect x="9" y="3" width="3" height="1" fill="#e6e6e6"/><rect x="0" y="11" width="10" height="1" fill="#a9a9a9"/><rect x="1" y="12" width="2" height="1" fill="#b5b5b5"/><rect x="3" y="12" width="5" height="2" fill="#a2a2a2"/><rect x="8" y="12" width="2" height="1" fill="#b5b5b5"/><rect x="10" y="12" width="1" height="1" fill="#a9a9a9"/><rect x="10" y="13" width="2" height="1" fill="#a9a9a9"/><rect x="11" y="14" width="1" height="1" fill="#9a9a9a"/><rect x="2" y="2" width="1" height="4" fill="#8f8bb8"/><rect x="5" y="2" width="1" height="1" fill="#8f8bb8"/><rect x="4" y="3" width="1" height="2" fill="#8f8bb8"/><rect x="6" y="3" width="1" height="2" fill="#8f8bb8"/><rect x="5" y="5" width="1" height="1" fill="#8f8bb8"/><rect x="3" y="7" width="1" height="1" fill="#8f8bb8"/><rect x="2" y="8" width="1" height="2" fill="#8f8bb8"/><rect x="4" y="8" width="1" height="2" fill="#8f8bb8"/><rect x="3" y="10" width="1" height="1" fill="#8f8bb8"/><rect x="6" y="7" width="1" height="4" fill="#8f8bb8"/><rect x="9" y="7" width="1" height="1" fill="#8f8bb8"/><rect x="8" y="8" width="1" height="2" fill="#8f8bb8"/><rect x="10" y="8" width="1" height="2" fill="#8f8bb8"/><rect x="9" y="10" width="1" height="1" fill="#8f8bb8"/></svg></div><div class="lt" style="top:596px;letter-spacing:-0.1207px">Domain member: Require strong (Windows 2000 or later) se...</div><div class="lv" style="top:596px">Not Defined</div><div class="lico" style="top:616px"><svg width="14" height="16" viewBox="0 0 14 16" ><rect x="1" y="1" width="11" height="11" fill="#ffffff"/><rect x="11" y="3" width="1" height="10" fill="#ffffff"/><rect x="0" y="0" width="1" height="12" fill="#a9a9a9"/><rect x="0" y="0" width="10" height="1" fill="#a9a9a9"/><rect x="10" y="1" width="1" height="1" fill="#a9a9a9"/><rect x="11" y="2" width="1" height="1" fill="#a9a9a9"/><rect x="12" y="3" width="1" height="12" fill="#a9a9a9"/><rect x="9" y="1" width="1" height="2" fill="#e2e2e2"/><rect x="10" y="2" width="1" height="1" fill="#d0d0d0"/><rect x="9" y="3" width="3" height="1" fill="#e6e6e6"/><rect x="0" y="11" width="10" height="1" fill="#a9a9a9"/><rect x="1" y="12" width="2" height="1" fill="#b5b5b5"/><rect x="3" y="12" width="5" height="2" fill="#a2a2a2"/><rect x="8" y="12" width="2" height="1" fill="#b5b5b5"/><rect x="10" y="12" width="1" height="1" fill="#a9a9a9"/><rect x="10" y="13" width="2" height="1" fill="#a9a9a9"/><rect x="11" y="14" width="1" height="1" fill="#9a9a9a"/><rect x="2" y="2" width="1" height="4" fill="#8f8bb8"/><rect x="5" y="2" width="1" height="1" fill="#8f8bb8"/><rect x="4" y="3" width="1" height="2" fill="#8f8bb8"/><rect x="6" y="3" width="1" height="2" fill="#8f8bb8"/><rect x="5" y="5" width="1" height="1" fill="#8f8bb8"/><rect x="3" y="7" width="1" height="1" fill="#8f8bb8"/><rect x="2" y="8" width="1" height="2" fill="#8f8bb8"/><rect x="4" y="8" width="1" height="2" fill="#8f8bb8"/><rect x="3" y="10" width="1" height="1" fill="#8f8bb8"/><rect x="6" y="7" width="1" height="4" fill="#8f8bb8"/><rect x="9" y="7" width="1" height="1" fill="#8f8bb8"/><rect x="8" y="8" width="1" height="2" fill="#8f8bb8"/><rect x="10" y="8" width="1" height="2" fill="#8f8bb8"/><rect x="9" y="10" width="1" height="1" fill="#8f8bb8"/></svg></div><div class="lt" style="top:615px;letter-spacing:-0.053px">Interactive logon: Display user information when the session...</div><div class="lv" style="top:615px">Not Defined</div><div class="lico" style="top:635px"><svg width="14" height="16" viewBox="0 0 14 16" ><rect x="1" y="1" width="11" height="11" fill="#ffffff"/><rect x="11" y="3" width="1" height="10" fill="#ffffff"/><rect x="0" y="0" width="1" height="12" fill="#a9a9a9"/><rect x="0" y="0" width="10" height="1" fill="#a9a9a9"/><rect x="10" y="1" width="1" height="1" fill="#a9a9a9"/><rect x="11" y="2" width="1" height="1" fill="#a9a9a9"/><rect x="12" y="3" width="1" height="12" fill="#a9a9a9"/><rect x="9" y="1" width="1" height="2" fill="#e2e2e2"/><rect x="10" y="2" width="1" height="1" fill="#d0d0d0"/><rect x="9" y="3" width="3" height="1" fill="#e6e6e6"/><rect x="0" y="11" width="10" height="1" fill="#a9a9a9"/><rect x="1" y="12" width="2" height="1" fill="#b5b5b5"/><rect x="3" y="12" width="5" height="2" fill="#a2a2a2"/><rect x="8" y="12" width="2" height="1" fill="#b5b5b5"/><rect x="10" y="12" width="1" height="1" fill="#a9a9a9"/><rect x="10" y="13" width="2" height="1" fill="#a9a9a9"/><rect x="11" y="14" width="1" height="1" fill="#9a9a9a"/><rect x="2" y="2" width="1" height="4" fill="#8f8bb8"/><rect x="5" y="2" width="1" height="1" fill="#8f8bb8"/><rect x="4" y="3" width="1" height="2" fill="#8f8bb8"/><rect x="6" y="3" width="1" height="2" fill="#8f8bb8"/><rect x="5" y="5" width="1" height="1" fill="#8f8bb8"/><rect x="3" y="7" width="1" height="1" fill="#8f8bb8"/><rect x="2" y="8" width="1" height="2" fill="#8f8bb8"/><rect x="4" y="8" width="1" height="2" fill="#8f8bb8"/><rect x="3" y="10" width="1" height="1" fill="#8f8bb8"/><rect x="6" y="7" width="1" height="4" fill="#8f8bb8"/><rect x="9" y="7" width="1" height="1" fill="#8f8bb8"/><rect x="8" y="8" width="1" height="2" fill="#8f8bb8"/><rect x="10" y="8" width="1" height="2" fill="#8f8bb8"/><rect x="9" y="10" width="1" height="1" fill="#8f8bb8"/></svg></div><div class="lt" style="top:634px;letter-spacing:-0.149px">Interactive logon: Do not require CTRL+ALT+DEL</div><div class="lv" style="top:634px">Not Defined</div><div class="lico" style="top:654px"><svg width="14" height="16" viewBox="0 0 14 16" ><rect x="1" y="1" width="11" height="11" fill="#ffffff"/><rect x="11" y="3" width="1" height="10" fill="#ffffff"/><rect x="0" y="0" width="1" height="12" fill="#a9a9a9"/><rect x="0" y="0" width="10" height="1" fill="#a9a9a9"/><rect x="10" y="1" width="1" height="1" fill="#a9a9a9"/><rect x="11" y="2" width="1" height="1" fill="#a9a9a9"/><rect x="12" y="3" width="1" height="12" fill="#a9a9a9"/><rect x="9" y="1" width="1" height="2" fill="#e2e2e2"/><rect x="10" y="2" width="1" height="1" fill="#d0d0d0"/><rect x="9" y="3" width="3" height="1" fill="#e6e6e6"/><rect x="0" y="11" width="10" height="1" fill="#a9a9a9"/><rect x="1" y="12" width="2" height="1" fill="#b5b5b5"/><rect x="3" y="12" width="5" height="2" fill="#a2a2a2"/><rect x="8" y="12" width="2" height="1" fill="#b5b5b5"/><rect x="10" y="12" width="1" height="1" fill="#a9a9a9"/><rect x="10" y="13" width="2" height="1" fill="#a9a9a9"/><rect x="11" y="14" width="1" height="1" fill="#9a9a9a"/><rect x="2" y="2" width="1" height="4" fill="#8f8bb8"/><rect x="5" y="2" width="1" height="1" fill="#8f8bb8"/><rect x="4" y="3" width="1" height="2" fill="#8f8bb8"/><rect x="6" y="3" width="1" height="2" fill="#8f8bb8"/><rect x="5" y="5" width="1" height="1" fill="#8f8bb8"/><rect x="3" y="7" width="1" height="1" fill="#8f8bb8"/><rect x="2" y="8" width="1" height="2" fill="#8f8bb8"/><rect x="4" y="8" width="1" height="2" fill="#8f8bb8"/><rect x="3" y="10" width="1" height="1" fill="#8f8bb8"/><rect x="6" y="7" width="1" height="4" fill="#8f8bb8"/><rect x="9" y="7" width="1" height="1" fill="#8f8bb8"/><rect x="8" y="8" width="1" height="2" fill="#8f8bb8"/><rect x="10" y="8" width="1" height="2" fill="#8f8bb8"/><rect x="9" y="10" width="1" height="1" fill="#8f8bb8"/></svg></div><div class="lt" style="top:653px;letter-spacing:0.011px">Interactive logon: Don't display last signed-in</div><div class="lv" style="top:653px">Not Defined</div><div class="lico" style="top:673px"><svg width="14" height="16" viewBox="0 0 14 16" ><rect x="1" y="1" width="11" height="11" fill="#ffffff"/><rect x="11" y="3" width="1" height="10" fill="#ffffff"/><rect x="0" y="0" width="1" height="12" fill="#a9a9a9"/><rect x="0" y="0" width="10" height="1" fill="#a9a9a9"/><rect x="10" y="1" width="1" height="1" fill="#a9a9a9"/><rect x="11" y="2" width="1" height="1" fill="#a9a9a9"/><rect x="12" y="3" width="1" height="12" fill="#a9a9a9"/><rect x="9" y="1" width="1" height="2" fill="#e2e2e2"/><rect x="10" y="2" width="1" height="1" fill="#d0d0d0"/><rect x="9" y="3" width="3" height="1" fill="#e6e6e6"/><rect x="0" y="11" width="10" height="1" fill="#a9a9a9"/><rect x="1" y="12" width="2" height="1" fill="#b5b5b5"/><rect x="3" y="12" width="5" height="2" fill="#a2a2a2"/><rect x="8" y="12" width="2" height="1" fill="#b5b5b5"/><rect x="10" y="12" width="1" height="1" fill="#a9a9a9"/><rect x="10" y="13" width="2" height="1" fill="#a9a9a9"/><rect x="11" y="14" width="1" height="1" fill="#9a9a9a"/><rect x="2" y="2" width="1" height="4" fill="#8f8bb8"/><rect x="5" y="2" width="1" height="1" fill="#8f8bb8"/><rect x="4" y="3" width="1" height="2" fill="#8f8bb8"/><rect x="6" y="3" width="1" height="2" fill="#8f8bb8"/><rect x="5" y="5" width="1" height="1" fill="#8f8bb8"/><rect x="3" y="7" width="1" height="1" fill="#8f8bb8"/><rect x="2" y="8" width="1" height="2" fill="#8f8bb8"/><rect x="4" y="8" width="1" height="2" fill="#8f8bb8"/><rect x="3" y="10" width="1" height="1" fill="#8f8bb8"/><rect x="6" y="7" width="1" height="4" fill="#8f8bb8"/><rect x="9" y="7" width="1" height="1" fill="#8f8bb8"/><rect x="8" y="8" width="1" height="2" fill="#8f8bb8"/><rect x="10" y="8" width="1" height="2" fill="#8f8bb8"/><rect x="9" y="10" width="1" height="1" fill="#8f8bb8"/></svg></div><div class="lt" style="top:672px;letter-spacing:-0.01px">Interactive logon: Don't display username at sign-in</div><div class="lv" style="top:672px">Not Defined</div><div class="lico" style="top:692px"><svg width="14" height="16" viewBox="0 0 14 16" ><rect x="1" y="1" width="11" height="11" fill="#ffffff"/><rect x="11" y="3" width="1" height="10" fill="#ffffff"/><rect x="0" y="0" width="1" height="12" fill="#a9a9a9"/><rect x="0" y="0" width="10" height="1" fill="#a9a9a9"/><rect x="10" y="1" width="1" height="1" fill="#a9a9a9"/><rect x="11" y="2" width="1" height="1" fill="#a9a9a9"/><rect x="12" y="3" width="1" height="12" fill="#a9a9a9"/><rect x="9" y="1" width="1" height="2" fill="#e2e2e2"/><rect x="10" y="2" width="1" height="1" fill="#d0d0d0"/><rect x="9" y="3" width="3" height="1" fill="#e6e6e6"/><rect x="0" y="11" width="10" height="1" fill="#a9a9a9"/><rect x="1" y="12" width="2" height="1" fill="#b5b5b5"/><rect x="3" y="12" width="5" height="2" fill="#a2a2a2"/><rect x="8" y="12" width="2" height="1" fill="#b5b5b5"/><rect x="10" y="12" width="1" height="1" fill="#a9a9a9"/><rect x="10" y="13" width="2" height="1" fill="#a9a9a9"/><rect x="11" y="14" width="1" height="1" fill="#9a9a9a"/><rect x="2" y="2" width="1" height="4" fill="#8f8bb8"/><rect x="5" y="2" width="1" height="1" fill="#8f8bb8"/><rect x="4" y="3" width="1" height="2" fill="#8f8bb8"/><rect x="6" y="3" width="1" height="2" fill="#8f8bb8"/><rect x="5" y="5" width="1" height="1" fill="#8f8bb8"/><rect x="3" y="7" width="1" height="1" fill="#8f8bb8"/><rect x="2" y="8" width="1" height="2" fill="#8f8bb8"/><rect x="4" y="8" width="1" height="2" fill="#8f8bb8"/><rect x="3" y="10" width="1" height="1" fill="#8f8bb8"/><rect x="6" y="7" width="1" height="4" fill="#8f8bb8"/><rect x="9" y="7" width="1" height="1" fill="#8f8bb8"/><rect x="8" y="8" width="1" height="2" fill="#8f8bb8"/><rect x="10" y="8" width="1" height="2" fill="#8f8bb8"/><rect x="9" y="10" width="1" height="1" fill="#8f8bb8"/></svg></div><div class="lt" style="top:691px;letter-spacing:0.065px">Interactive logon: Machine account lockout threshold</div><div class="lv" style="top:691px">Not Defined</div></div></body></html>
